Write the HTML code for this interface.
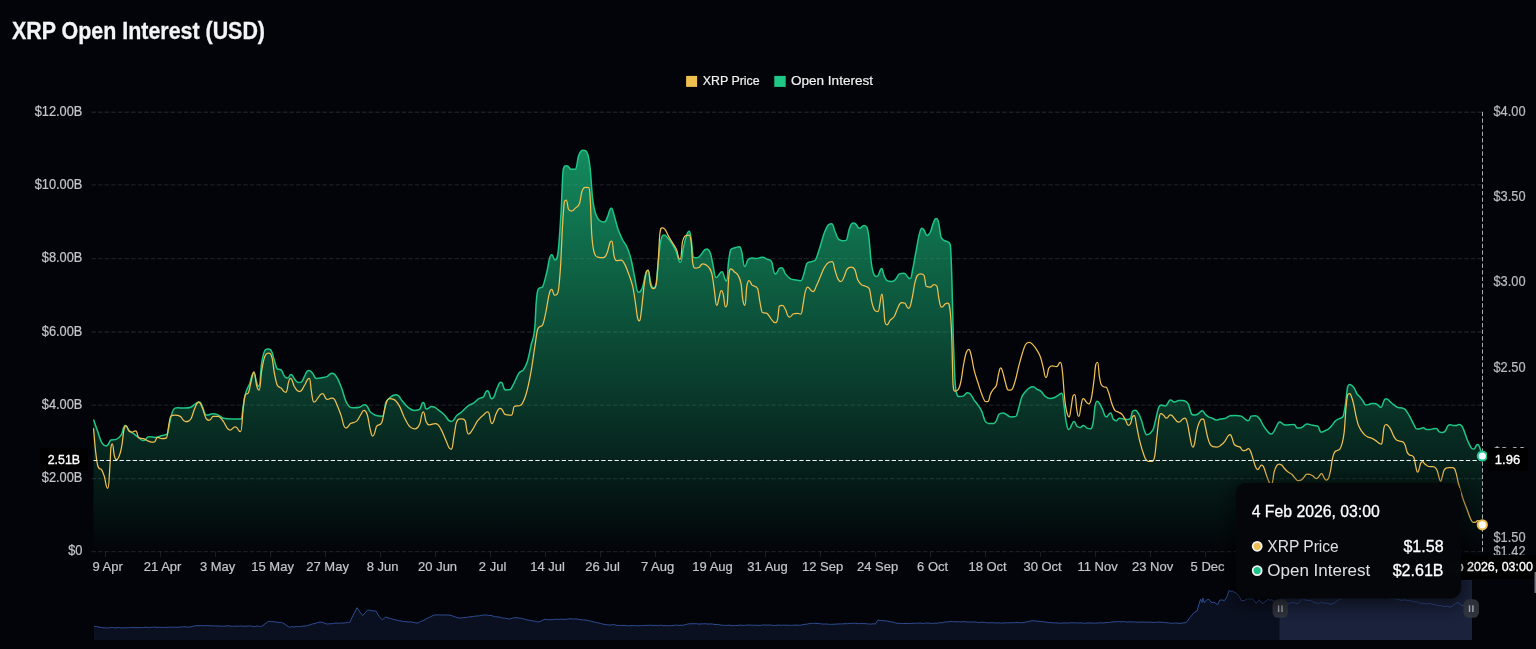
<!DOCTYPE html>
<html lang="en"><head><meta charset="utf-8"><title>XRP Open Interest (USD)</title>
<style>html,body{margin:0;padding:0;background:#020409;overflow:hidden}body{width:1536px;height:649px}svg{display:block;will-change:transform}</style></head>
<body>
<svg width="1536" height="649" viewBox="0 0 1536 649" font-family='"Liberation Sans", sans-serif'>
<defs>
<linearGradient id="ga" gradientUnits="userSpaceOnUse" x1="0" y1="150" x2="0" y2="551.5">
<stop offset="0" stop-color="#1bc482" stop-opacity="0.70"/>
<stop offset="1" stop-color="#1bc482" stop-opacity="0"/>
</linearGradient>
<filter id="sh" x="-20%" y="-30%" width="140%" height="160%"><feGaussianBlur stdDeviation="9"/></filter>
<clipPath id="cp"><rect x="93" y="100" width="1389.5" height="452"/></clipPath>
</defs>
<rect width="1536" height="649" fill="#020409"/>
<text x="12" y="38.8" font-size="23" font-weight="700" fill="#f3f4f5" stroke="#f3f4f5" stroke-width="0.3" textLength="253" lengthAdjust="spacingAndGlyphs">XRP Open Interest (USD)</text>
<rect x="686.1" y="75.9" width="11" height="11" fill="#efbf50"/>
<text x="702.7" y="84.9" font-size="12" fill="#f0f1f1" stroke="#f0f1f1" stroke-width="0.2" textLength="57" lengthAdjust="spacingAndGlyphs">XRP Price</text>
<rect x="774.3" y="75.9" width="11.4" height="11" fill="#20c887"/>
<text x="791" y="84.9" font-size="12" fill="#f0f1f1" stroke="#f0f1f1" stroke-width="0.2" textLength="82" lengthAdjust="spacingAndGlyphs">Open Interest</text>
<line x1="91.5" y1="112.25" x2="1482" y2="112.25" stroke="#ffffff" stroke-opacity="0.105" stroke-width="1.3" stroke-dasharray="4.4 2.2"/>
<text transform="translate(82.4 116.0) scale(0.915 1)" font-size="14" fill="#c3c5c9" stroke="#c3c5c9" stroke-width="0.22" text-anchor="end">$12.00B</text>
<line x1="91.5" y1="184.90" x2="1482" y2="184.90" stroke="#ffffff" stroke-opacity="0.105" stroke-width="1.3" stroke-dasharray="4.4 2.2"/>
<text transform="translate(82.4 188.6) scale(0.915 1)" font-size="14" fill="#c3c5c9" stroke="#c3c5c9" stroke-width="0.22" text-anchor="end">$10.00B</text>
<line x1="91.5" y1="258.65" x2="1482" y2="258.65" stroke="#ffffff" stroke-opacity="0.105" stroke-width="1.3" stroke-dasharray="4.4 2.2"/>
<text transform="translate(82.4 262.3) scale(0.915 1)" font-size="14" fill="#c3c5c9" stroke="#c3c5c9" stroke-width="0.22" text-anchor="end">$8.00B</text>
<line x1="91.5" y1="332.00" x2="1482" y2="332.00" stroke="#ffffff" stroke-opacity="0.105" stroke-width="1.3" stroke-dasharray="4.4 2.2"/>
<text transform="translate(82.4 335.7) scale(0.915 1)" font-size="14" fill="#c3c5c9" stroke="#c3c5c9" stroke-width="0.22" text-anchor="end">$6.00B</text>
<line x1="91.5" y1="405.20" x2="1482" y2="405.20" stroke="#ffffff" stroke-opacity="0.105" stroke-width="1.3" stroke-dasharray="4.4 2.2"/>
<text transform="translate(82.4 408.9) scale(0.915 1)" font-size="14" fill="#c3c5c9" stroke="#c3c5c9" stroke-width="0.22" text-anchor="end">$4.00B</text>
<line x1="91.5" y1="478.70" x2="1482" y2="478.70" stroke="#ffffff" stroke-opacity="0.105" stroke-width="1.3" stroke-dasharray="4.4 2.2"/>
<text transform="translate(82.4 482.4) scale(0.915 1)" font-size="14" fill="#c3c5c9" stroke="#c3c5c9" stroke-width="0.22" text-anchor="end">$2.00B</text>
<line x1="91.5" y1="551.60" x2="1482" y2="551.60" stroke="#ffffff" stroke-opacity="0.105" stroke-width="1.3" stroke-dasharray="4.4 2.2"/>
<text transform="translate(82.4 555.3) scale(0.915 1)" font-size="14" fill="#c3c5c9" stroke="#c3c5c9" stroke-width="0.22" text-anchor="end">$0</text>
<text transform="translate(1493.5 116.1) scale(0.915 1)" font-size="14" fill="#b9bbc0" stroke="#b9bbc0" stroke-width="0.22">$4.00</text>
<text transform="translate(1493.5 201.3) scale(0.915 1)" font-size="14" fill="#b9bbc0" stroke="#b9bbc0" stroke-width="0.22">$3.50</text>
<text transform="translate(1493.5 286.4) scale(0.915 1)" font-size="14" fill="#b9bbc0" stroke="#b9bbc0" stroke-width="0.22">$3.00</text>
<text transform="translate(1493.5 371.6) scale(0.915 1)" font-size="14" fill="#b9bbc0" stroke="#b9bbc0" stroke-width="0.22">$2.50</text>
<text transform="translate(1493.5 456.8) scale(0.915 1)" font-size="14" fill="#b9bbc0" stroke="#b9bbc0" stroke-width="0.22">$2.00</text>
<text transform="translate(1493.5 542.0) scale(0.915 1)" font-size="14" fill="#b9bbc0" stroke="#b9bbc0" stroke-width="0.22">$1.50</text>
<text transform="translate(1493.5 555.6) scale(0.915 1)" font-size="14" fill="#b9bbc0" stroke="#b9bbc0" stroke-width="0.22">$1.42</text>
<line x1="105.6" y1="551.6" x2="105.6" y2="557.1" stroke="#ffffff" stroke-opacity="0.11" stroke-width="1"/>
<text x="107.6" y="570.9" font-size="13" fill="#c3c5c9" stroke="#c3c5c9" stroke-width="0.2" text-anchor="middle">9 Apr</text>
<line x1="160.6" y1="551.6" x2="160.6" y2="557.1" stroke="#ffffff" stroke-opacity="0.11" stroke-width="1"/>
<text x="162.6" y="570.9" font-size="13" fill="#c3c5c9" stroke="#c3c5c9" stroke-width="0.2" text-anchor="middle">21 Apr</text>
<line x1="215.6" y1="551.6" x2="215.6" y2="557.1" stroke="#ffffff" stroke-opacity="0.11" stroke-width="1"/>
<text x="217.6" y="570.9" font-size="13" fill="#c3c5c9" stroke="#c3c5c9" stroke-width="0.2" text-anchor="middle">3 May</text>
<line x1="270.6" y1="551.6" x2="270.6" y2="557.1" stroke="#ffffff" stroke-opacity="0.11" stroke-width="1"/>
<text x="272.6" y="570.9" font-size="13" fill="#c3c5c9" stroke="#c3c5c9" stroke-width="0.2" text-anchor="middle">15 May</text>
<line x1="325.6" y1="551.6" x2="325.6" y2="557.1" stroke="#ffffff" stroke-opacity="0.11" stroke-width="1"/>
<text x="327.6" y="570.9" font-size="13" fill="#c3c5c9" stroke="#c3c5c9" stroke-width="0.2" text-anchor="middle">27 May</text>
<line x1="380.6" y1="551.6" x2="380.6" y2="557.1" stroke="#ffffff" stroke-opacity="0.11" stroke-width="1"/>
<text x="382.6" y="570.9" font-size="13" fill="#c3c5c9" stroke="#c3c5c9" stroke-width="0.2" text-anchor="middle">8 Jun</text>
<line x1="435.6" y1="551.6" x2="435.6" y2="557.1" stroke="#ffffff" stroke-opacity="0.11" stroke-width="1"/>
<text x="437.6" y="570.9" font-size="13" fill="#c3c5c9" stroke="#c3c5c9" stroke-width="0.2" text-anchor="middle">20 Jun</text>
<line x1="490.6" y1="551.6" x2="490.6" y2="557.1" stroke="#ffffff" stroke-opacity="0.11" stroke-width="1"/>
<text x="492.6" y="570.9" font-size="13" fill="#c3c5c9" stroke="#c3c5c9" stroke-width="0.2" text-anchor="middle">2 Jul</text>
<line x1="545.6" y1="551.6" x2="545.6" y2="557.1" stroke="#ffffff" stroke-opacity="0.11" stroke-width="1"/>
<text x="547.6" y="570.9" font-size="13" fill="#c3c5c9" stroke="#c3c5c9" stroke-width="0.2" text-anchor="middle">14 Jul</text>
<line x1="600.6" y1="551.6" x2="600.6" y2="557.1" stroke="#ffffff" stroke-opacity="0.11" stroke-width="1"/>
<text x="602.6" y="570.9" font-size="13" fill="#c3c5c9" stroke="#c3c5c9" stroke-width="0.2" text-anchor="middle">26 Jul</text>
<line x1="655.6" y1="551.6" x2="655.6" y2="557.1" stroke="#ffffff" stroke-opacity="0.11" stroke-width="1"/>
<text x="657.6" y="570.9" font-size="13" fill="#c3c5c9" stroke="#c3c5c9" stroke-width="0.2" text-anchor="middle">7 Aug</text>
<line x1="710.6" y1="551.6" x2="710.6" y2="557.1" stroke="#ffffff" stroke-opacity="0.11" stroke-width="1"/>
<text x="712.6" y="570.9" font-size="13" fill="#c3c5c9" stroke="#c3c5c9" stroke-width="0.2" text-anchor="middle">19 Aug</text>
<line x1="765.6" y1="551.6" x2="765.6" y2="557.1" stroke="#ffffff" stroke-opacity="0.11" stroke-width="1"/>
<text x="767.6" y="570.9" font-size="13" fill="#c3c5c9" stroke="#c3c5c9" stroke-width="0.2" text-anchor="middle">31 Aug</text>
<line x1="820.6" y1="551.6" x2="820.6" y2="557.1" stroke="#ffffff" stroke-opacity="0.11" stroke-width="1"/>
<text x="822.6" y="570.9" font-size="13" fill="#c3c5c9" stroke="#c3c5c9" stroke-width="0.2" text-anchor="middle">12 Sep</text>
<line x1="875.6" y1="551.6" x2="875.6" y2="557.1" stroke="#ffffff" stroke-opacity="0.11" stroke-width="1"/>
<text x="877.6" y="570.9" font-size="13" fill="#c3c5c9" stroke="#c3c5c9" stroke-width="0.2" text-anchor="middle">24 Sep</text>
<line x1="930.6" y1="551.6" x2="930.6" y2="557.1" stroke="#ffffff" stroke-opacity="0.11" stroke-width="1"/>
<text x="932.6" y="570.9" font-size="13" fill="#c3c5c9" stroke="#c3c5c9" stroke-width="0.2" text-anchor="middle">6 Oct</text>
<line x1="985.6" y1="551.6" x2="985.6" y2="557.1" stroke="#ffffff" stroke-opacity="0.11" stroke-width="1"/>
<text x="987.6" y="570.9" font-size="13" fill="#c3c5c9" stroke="#c3c5c9" stroke-width="0.2" text-anchor="middle">18 Oct</text>
<line x1="1040.6" y1="551.6" x2="1040.6" y2="557.1" stroke="#ffffff" stroke-opacity="0.11" stroke-width="1"/>
<text x="1042.6" y="570.9" font-size="13" fill="#c3c5c9" stroke="#c3c5c9" stroke-width="0.2" text-anchor="middle">30 Oct</text>
<line x1="1095.6" y1="551.6" x2="1095.6" y2="557.1" stroke="#ffffff" stroke-opacity="0.11" stroke-width="1"/>
<text x="1097.6" y="570.9" font-size="13" fill="#c3c5c9" stroke="#c3c5c9" stroke-width="0.2" text-anchor="middle">11 Nov</text>
<line x1="1150.6" y1="551.6" x2="1150.6" y2="557.1" stroke="#ffffff" stroke-opacity="0.11" stroke-width="1"/>
<text x="1152.6" y="570.9" font-size="13" fill="#c3c5c9" stroke="#c3c5c9" stroke-width="0.2" text-anchor="middle">23 Nov</text>
<line x1="1205.6" y1="551.6" x2="1205.6" y2="557.1" stroke="#ffffff" stroke-opacity="0.11" stroke-width="1"/>
<text x="1207.6" y="570.9" font-size="13" fill="#c3c5c9" stroke="#c3c5c9" stroke-width="0.2" text-anchor="middle">5 Dec</text>
<g clip-path="url(#cp)">
<path d="M93.5 419.5C95.0 423.7 96.4 428.1 97.9 432.1C99.2 435.7 100.5 440.6 101.8 442.6C103.3 444.8 103.6 446.0 106.2 446.0C109.0 446.0 109.4 440.4 110.9 440.0C112.7 439.4 114.4 440.0 116.2 439.4C117.9 438.9 119.7 437.4 121.4 434.7C122.7 432.7 123.1 425.6 125.3 425.6C127.6 425.6 128.0 429.6 129.3 430.8C130.6 432.0 131.9 432.5 133.2 433.4C134.9 434.7 136.7 436.2 138.4 437.4C140.2 438.5 140.6 440.5 143.7 440.5C146.7 440.5 145.9 436.8 148.9 436.8C152.7 436.8 151.6 437.4 155.5 437.4C159.3 437.4 159.8 436.1 162.0 435.5C163.7 435.1 165.5 435.5 167.2 434.2C168.1 433.6 169.0 425.2 169.9 421.6C171.0 417.0 172.1 411.5 173.3 409.9C174.7 407.8 175.1 407.8 177.7 407.8C181.5 407.8 180.4 408.0 184.3 408.0C188.1 408.0 188.6 408.0 190.8 407.2C192.6 406.6 194.3 404.2 196.0 403.3C197.2 402.7 197.5 402.0 199.4 402.0C201.3 402.0 201.5 405.3 202.6 407.2C203.9 409.6 204.2 415.1 206.5 415.1C210.3 415.1 209.2 413.8 213.1 413.8C216.1 413.8 216.6 414.4 218.3 415.1C220.0 415.8 221.8 417.7 223.5 418.2C226.2 419.0 228.8 419.0 231.4 419.0C234.7 419.0 238.0 419.0 241.3 419.0C242.0 419.0 242.6 409.7 243.2 405.9C244.0 400.6 244.9 396.0 245.8 392.8C247.1 388.1 248.4 386.9 249.7 383.7C251.0 380.4 251.4 373.2 253.6 373.2C255.2 373.2 255.4 378.9 256.3 381.1C257.1 383.2 257.4 386.3 258.9 386.3C260.4 386.3 260.6 369.4 261.5 364.0C262.4 358.6 263.2 354.2 264.1 352.3C265.4 349.3 265.8 348.9 268.0 348.9C270.3 348.9 270.7 349.7 272.0 352.3C272.8 354.0 273.7 358.7 274.6 361.4C275.5 364.2 276.3 368.1 277.2 368.8C278.5 369.8 279.8 368.8 281.1 369.8C282.4 370.8 283.8 376.2 285.1 377.1C285.9 377.7 286.2 377.9 287.7 377.9C289.7 377.9 289.1 374.5 291.1 374.5C292.9 374.5 293.2 377.3 294.2 378.4C295.5 379.9 295.9 382.4 298.2 382.4C300.1 382.4 300.4 382.4 301.6 381.8C302.6 381.4 303.7 377.5 304.7 375.8C306.0 373.7 306.3 370.6 308.6 370.6C310.9 370.6 311.2 372.0 312.6 373.2C313.9 374.4 314.2 378.4 316.5 378.4C319.5 378.4 320.0 378.0 321.7 377.7C323.5 377.4 325.2 377.2 327.0 376.6C328.7 376.0 329.1 373.2 332.2 373.2C335.3 373.2 335.7 375.7 337.4 378.4C338.7 380.5 340.1 384.2 341.4 387.6C343.1 392.0 344.8 399.8 346.5 402.6C348.7 406.1 349.3 407.8 353.1 407.8C356.9 407.8 357.5 407.8 359.6 407.3C361.4 406.9 361.8 404.7 364.9 404.7C367.9 404.7 368.4 410.1 370.1 411.8C371.9 413.4 373.6 414.6 375.3 415.2C377.7 416.0 378.3 416.2 382.4 416.2C384.4 416.2 384.7 405.2 385.8 402.6C387.1 399.6 388.4 398.9 389.7 397.9C391.9 396.1 392.5 394.7 396.3 394.7C399.3 394.7 399.8 398.1 401.5 400.0C403.7 402.3 405.9 405.7 408.1 407.3C410.3 408.9 410.8 410.4 414.6 410.4C417.7 410.4 418.1 410.4 419.9 409.1C421.0 408.3 421.3 402.6 423.3 402.6C425.1 402.6 424.6 409.1 426.4 409.1C429.5 409.1 428.6 406.5 431.6 406.5C435.5 406.5 436.0 408.5 438.2 409.9C440.4 411.3 442.6 413.2 444.7 415.2C446.9 417.1 447.5 421.4 451.3 421.4C454.3 421.4 454.8 417.3 456.5 415.7C458.3 414.1 460.0 413.2 461.8 411.8C463.9 410.0 466.1 407.2 468.3 405.7C470.0 404.6 471.8 404.3 473.5 403.1C475.3 402.0 477.0 399.7 478.8 398.7C480.3 397.8 481.9 398.1 483.5 396.8C484.8 395.8 485.1 390.8 487.4 390.8C490.0 390.8 489.3 398.7 491.9 398.7C494.9 398.7 495.4 391.2 497.1 388.2C498.4 385.9 498.7 382.2 501.0 382.2C503.6 382.2 502.9 390.0 505.5 390.0C508.2 390.0 508.6 390.0 510.2 389.5C511.5 389.1 512.8 385.3 514.1 383.0C515.9 379.8 517.6 374.4 519.4 372.5C520.7 371.0 522.0 371.4 523.3 369.9C524.6 368.3 525.9 365.9 527.2 362.0C528.5 358.1 529.8 351.3 531.1 345.0C532.4 338.7 533.8 341.0 535.1 324.0C535.4 319.6 535.8 308.4 536.1 303.9C536.8 294.9 537.5 290.5 538.1 289.3C539.7 286.3 541.3 288.9 542.8 286.3C544.2 284.1 545.6 276.6 546.9 271.7C548.5 266.1 548.9 254.7 551.6 254.7C553.7 254.7 553.1 260.0 555.1 260.0C556.8 260.0 557.1 258.6 558.0 252.7C559.0 246.7 560.0 228.9 561.0 213.2C561.8 200.6 562.5 172.1 563.3 169.3C564.3 165.8 564.5 165.8 566.2 165.8C569.1 165.8 569.6 169.3 571.2 169.3C572.7 169.3 574.1 169.3 575.6 169.3C576.6 169.3 577.6 158.7 578.5 156.1C580.0 152.2 580.4 150.2 582.9 150.2C585.5 150.2 585.9 150.2 587.3 153.2C588.3 155.1 589.3 160.9 590.2 169.3C591.0 176.0 591.8 192.1 592.6 198.5C593.6 206.5 594.5 210.1 595.5 213.2C596.9 217.5 598.2 219.4 599.6 220.5C601.2 221.8 601.6 222.0 604.3 222.0C606.3 222.0 606.6 218.4 607.8 216.1C609.0 213.8 609.3 208.2 611.3 208.2C613.0 208.2 613.3 213.1 614.2 216.1C615.5 219.9 616.8 225.6 618.0 229.3C619.5 233.5 621.0 236.6 622.4 239.5C623.9 242.4 625.4 243.6 626.8 246.8C628.3 250.1 629.8 254.2 631.2 260.0C632.4 264.6 633.6 272.4 634.7 277.6C636.0 283.1 636.3 292.2 638.5 292.2C640.8 292.2 641.1 290.7 642.3 287.8C643.5 285.1 644.7 275.8 645.9 273.2C646.5 271.6 646.7 270.2 647.9 270.2C649.3 270.2 649.5 277.9 650.2 280.5C651.2 283.8 651.5 287.8 653.2 287.8C654.9 287.8 655.1 287.8 656.1 283.4C656.8 280.3 657.5 269.3 658.1 262.9C658.9 255.6 659.7 246.2 660.5 242.4C661.7 236.8 662.0 235.1 664.0 235.1C666.2 235.1 666.5 236.8 667.8 238.0C669.3 239.5 670.7 241.5 672.2 243.9C673.7 246.3 675.1 249.4 676.6 252.7C677.9 255.6 678.2 262.3 680.4 262.3C682.1 262.3 682.3 252.6 683.3 248.3C684.3 244.0 685.3 239.2 686.2 236.6C687.2 234.0 687.5 231.3 689.2 231.3C690.4 231.3 690.5 235.5 691.2 239.5C691.9 243.5 692.6 256.8 693.3 257.1C694.5 257.7 694.9 257.7 697.1 257.7C699.6 257.7 700.0 255.4 701.5 254.1C703.2 252.6 703.7 248.9 706.7 248.9C708.8 248.9 709.1 249.9 710.2 252.7C711.2 255.0 712.2 261.7 713.2 265.9C714.1 270.0 714.4 277.6 716.1 277.6C717.8 277.6 718.0 275.6 719.0 274.6C720.0 273.7 720.2 271.7 722.0 271.7C723.7 271.7 723.9 277.5 724.9 279.0C725.5 280.0 725.6 281.1 726.6 281.1C727.7 281.1 727.8 267.5 728.4 262.9C729.2 256.8 730.0 250.8 730.7 249.8C732.2 247.7 733.7 248.2 735.1 247.7C736.6 247.3 737.0 246.8 739.5 246.8C740.9 246.8 741.1 250.1 741.9 252.7C742.8 256.0 743.1 266.4 744.8 266.4C746.5 266.4 746.7 261.1 747.7 260.0C749.1 258.4 749.4 258.0 751.8 258.0C754.3 258.0 753.6 258.5 756.2 258.5C759.8 258.5 758.7 257.3 762.3 257.3C765.0 257.3 765.4 258.4 766.9 259.2C768.5 259.9 770.0 259.3 771.6 261.6C772.8 263.5 773.1 273.9 775.3 273.9C777.6 273.9 777.9 269.1 779.3 268.4C780.0 268.0 780.2 267.8 781.4 267.8C783.8 267.8 784.1 272.3 785.4 273.9C787.0 275.9 788.5 277.7 790.1 278.6C792.1 279.7 794.2 279.7 796.2 280.1C797.8 280.4 798.1 280.7 800.8 280.7C802.6 280.7 802.9 276.8 803.9 273.9C804.9 271.1 806.0 264.2 807.0 263.2C808.5 261.6 810.1 262.2 811.6 261.6C812.8 261.2 814.1 261.4 815.3 260.1C816.6 258.6 818.0 253.3 819.3 249.3C820.9 244.7 822.4 237.9 823.9 233.9C825.5 229.9 827.0 225.8 828.6 224.6C829.6 223.9 829.8 223.7 831.6 223.7C833.4 223.7 833.7 228.5 834.7 230.8C836.1 233.8 837.4 238.2 838.7 239.4C840.0 240.5 840.3 240.7 842.4 240.7C844.8 240.7 845.1 240.7 846.4 240.1C847.4 239.6 848.3 231.7 849.2 229.3C850.5 225.8 850.9 223.1 853.2 223.1C855.0 223.1 855.3 223.8 856.3 224.6C857.3 225.4 857.6 228.3 859.4 228.3C862.1 228.3 861.3 225.6 864.0 225.6C865.8 225.6 866.0 225.6 867.1 227.7C867.8 229.2 868.5 233.8 869.2 240.1C869.7 244.5 870.3 254.1 870.8 258.5C871.6 265.7 872.4 270.1 873.2 272.4C874.5 275.9 874.8 276.4 876.9 276.4C878.4 276.4 878.6 273.8 879.4 272.4C880.1 271.1 880.3 268.4 881.6 268.4C883.0 268.4 883.2 273.6 884.0 275.5C885.0 277.8 886.1 280.1 887.1 280.7C888.6 281.6 889.0 281.6 891.7 281.6C893.9 281.6 894.2 280.6 895.4 279.5C896.8 278.3 898.1 274.5 899.4 273.9C901.0 273.3 901.3 273.3 904.0 273.3C906.2 273.3 906.5 276.1 907.7 277.0C908.6 277.7 908.8 278.6 910.2 278.6C911.6 278.6 911.8 272.9 912.7 269.3C913.9 263.9 915.1 255.7 916.4 249.3C917.4 244.0 918.4 237.2 919.4 233.9C920.3 231.2 920.5 228.3 921.9 228.3C923.2 228.3 923.4 229.4 924.1 230.2C925.1 231.4 925.4 235.4 927.2 235.4C928.9 235.4 929.2 234.1 930.2 232.3C931.3 230.6 932.3 225.3 933.3 223.1C934.3 220.9 934.6 218.5 936.4 218.5C937.7 218.5 937.8 219.9 938.5 222.2C939.4 224.8 940.2 234.6 941.0 237.0C941.8 239.3 942.7 239.4 943.5 240.1C944.7 241.0 945.9 240.8 947.2 241.6C948.2 242.3 949.2 241.6 950.3 244.7C950.8 246.2 951.3 262.1 951.8 277.0C952.3 291.9 952.8 322.1 953.3 338.6C953.9 355.2 954.4 370.6 954.9 378.7C955.3 385.8 955.8 390.2 956.2 392.0C957.4 396.5 957.7 396.5 959.6 396.5C961.9 396.5 962.3 396.4 963.6 395.9C964.9 395.5 965.2 392.8 967.5 392.8C969.0 392.8 969.2 393.2 970.1 393.8C971.4 394.8 972.7 398.0 974.0 399.9C975.3 401.7 976.7 403.1 978.0 405.1C979.3 407.0 980.6 408.7 981.9 411.6C982.9 414.0 984.0 419.2 985.0 420.8C986.2 422.6 987.3 423.4 988.4 423.4C990.2 423.4 991.9 423.4 993.7 423.4C994.5 423.4 995.4 422.2 996.3 420.8C997.2 419.4 998.0 415.1 998.9 414.3C1000.2 413.0 1000.5 413.0 1002.8 413.0C1005.1 413.0 1005.5 414.1 1006.8 414.8C1008.1 415.4 1008.4 416.9 1010.7 416.9C1013.7 416.9 1014.2 416.9 1015.9 416.4C1016.8 416.1 1017.7 411.8 1018.5 409.0C1019.6 405.7 1020.6 399.8 1021.7 397.2C1022.8 394.5 1024.0 393.4 1025.1 392.0C1026.4 390.4 1027.7 388.8 1029.0 388.1C1030.3 387.3 1030.7 386.8 1033.0 386.8C1035.2 386.8 1035.6 388.7 1036.9 389.4C1038.2 390.1 1039.5 390.2 1040.8 391.2C1042.1 392.2 1043.4 394.9 1044.7 395.9C1046.5 397.3 1046.9 398.5 1050.0 398.5C1053.0 398.5 1053.5 398.0 1055.2 397.2C1056.5 396.7 1057.8 395.4 1059.1 394.6C1060.0 394.1 1060.2 393.3 1061.8 393.3C1063.0 393.3 1063.1 399.5 1063.8 403.8C1064.6 408.6 1065.4 418.4 1066.2 422.1C1067.1 426.3 1067.3 429.4 1068.8 429.4C1070.5 429.4 1070.7 426.1 1071.7 424.7C1072.5 423.6 1072.7 421.6 1074.1 421.6C1075.6 421.6 1075.8 425.3 1076.7 426.0C1077.8 427.0 1078.1 427.4 1080.1 427.4C1082.1 427.4 1081.5 425.5 1083.5 425.5C1085.3 425.5 1085.6 427.4 1086.6 427.9C1087.9 428.4 1088.3 428.7 1090.6 428.7C1092.1 428.7 1092.3 426.5 1093.2 422.1C1093.8 419.0 1094.4 409.4 1095.0 406.4C1095.7 403.0 1095.9 401.2 1097.1 401.2C1098.6 401.2 1098.8 402.6 1099.7 403.8C1100.8 405.3 1101.8 408.2 1102.9 410.3C1104.0 412.6 1104.3 416.9 1106.3 416.9C1107.8 416.9 1108.0 415.0 1108.9 414.3C1109.5 413.8 1109.6 413.0 1110.7 413.0C1111.9 413.0 1112.1 417.1 1112.8 418.2C1113.9 419.8 1114.1 420.8 1116.0 420.8C1117.9 420.8 1117.4 418.2 1119.4 418.2C1121.6 418.2 1122.0 418.8 1123.3 419.0C1124.6 419.2 1124.9 419.5 1127.2 419.5C1129.2 419.5 1129.5 419.5 1130.6 418.2C1131.2 417.5 1131.8 412.6 1132.4 411.6C1133.3 410.3 1133.5 410.3 1135.1 410.3C1137.1 410.3 1137.3 412.0 1138.5 413.7C1139.5 415.3 1140.6 417.8 1141.6 420.8C1142.5 423.3 1143.4 427.8 1144.2 430.0C1145.1 432.2 1145.3 434.7 1146.8 434.7C1149.1 434.7 1149.5 433.8 1150.8 432.6C1151.6 431.7 1152.5 430.8 1153.4 428.7C1154.3 426.5 1155.1 421.7 1156.0 418.2C1156.9 414.7 1157.8 409.5 1158.6 407.7C1159.5 405.9 1159.7 405.1 1161.2 405.1C1163.5 405.1 1162.9 405.9 1165.2 405.9C1166.7 405.9 1166.9 404.3 1167.8 403.3C1168.7 402.3 1168.9 399.9 1170.4 399.9C1172.7 399.9 1172.0 402.0 1174.3 402.0C1176.6 402.0 1177.0 400.8 1178.3 400.6C1179.6 400.4 1179.9 400.4 1182.2 400.4C1184.5 400.4 1184.8 400.7 1186.1 401.7C1187.0 402.3 1187.9 403.3 1188.7 405.1C1189.6 406.9 1190.5 412.4 1191.4 413.7C1191.6 414.1 1191.8 414.3 1192.0 414.5C1193.0 415.1 1193.3 415.1 1195.0 415.1C1197.3 415.1 1197.7 413.9 1199.0 413.1C1200.1 412.4 1200.4 410.7 1202.4 410.7C1203.9 410.7 1204.2 413.2 1205.0 414.1C1206.4 415.4 1207.7 416.4 1209.0 417.1C1210.4 417.7 1211.7 417.9 1213.0 418.5C1214.0 418.9 1214.3 420.1 1216.0 420.1C1218.4 420.1 1218.7 419.3 1220.0 419.1C1222.0 418.6 1224.0 418.8 1226.0 418.1C1227.4 417.6 1228.7 415.8 1230.1 415.7C1231.7 415.5 1232.1 415.5 1235.1 415.5C1238.6 415.5 1239.1 415.5 1241.1 416.1C1242.4 416.5 1243.7 418.2 1245.1 419.1C1246.1 419.7 1246.3 420.7 1248.1 420.7C1249.8 420.7 1250.1 416.4 1251.1 416.1C1252.4 415.7 1252.7 415.7 1255.1 415.7C1257.4 415.7 1257.8 416.7 1259.1 418.1C1260.4 419.4 1261.8 423.0 1263.1 425.1C1264.4 427.2 1265.8 429.2 1267.1 430.7C1268.4 432.1 1268.8 434.1 1271.1 434.1C1272.9 434.1 1273.1 432.5 1274.1 431.1C1275.1 429.7 1276.1 426.6 1277.1 425.1C1278.0 423.8 1278.2 422.1 1279.7 422.1C1281.3 422.1 1281.6 423.2 1282.5 423.7C1283.7 424.2 1284.0 425.1 1286.1 425.1C1288.5 425.1 1288.8 424.8 1290.1 424.7C1291.5 424.6 1291.8 424.5 1294.1 424.5C1295.9 424.5 1296.1 428.1 1297.1 428.1C1298.1 428.1 1299.1 428.1 1300.1 428.1C1301.1 428.1 1302.1 427.2 1303.1 426.7C1304.5 425.9 1304.8 424.1 1307.1 424.1C1309.5 424.1 1309.8 424.8 1311.2 425.1C1312.5 425.3 1313.8 425.4 1315.2 425.7C1316.2 425.9 1317.2 425.7 1318.2 426.5C1319.2 427.2 1319.4 432.1 1321.2 432.1C1322.9 432.1 1323.2 431.5 1324.2 431.1C1325.5 430.5 1326.8 430.0 1328.2 429.1C1329.5 428.1 1330.8 426.6 1332.2 425.1C1333.2 423.9 1334.2 422.0 1335.2 421.1C1336.5 419.8 1337.9 419.5 1339.2 418.7C1340.5 417.8 1341.9 418.7 1343.2 416.1C1344.1 414.2 1345.1 406.6 1346.0 400.0C1346.5 396.3 1347.1 388.9 1347.6 387.0C1348.3 384.6 1348.4 384.6 1349.6 384.6C1351.0 384.6 1351.2 385.1 1352.0 385.6C1352.8 386.2 1353.6 387.2 1354.4 388.4C1355.3 389.8 1356.2 392.7 1357.0 394.0C1358.0 395.5 1359.0 395.9 1360.0 397.0C1361.0 398.2 1362.0 399.7 1363.0 401.0C1364.0 402.4 1364.3 405.0 1366.0 405.0C1367.8 405.0 1368.0 404.7 1369.0 404.4C1370.0 404.2 1370.3 403.4 1372.0 403.4C1373.8 403.4 1374.0 403.5 1375.0 403.6C1376.0 403.8 1377.0 404.4 1378.0 405.0C1379.0 405.7 1379.3 407.4 1381.1 407.4C1382.2 407.4 1382.4 404.4 1383.1 403.0C1383.7 401.6 1384.4 399.0 1385.1 399.0C1385.7 399.0 1386.4 399.0 1387.1 399.0C1388.1 399.0 1389.1 400.8 1390.1 401.6C1391.4 402.8 1392.7 404.1 1394.1 405.0C1395.4 406.0 1396.7 407.3 1398.1 407.6C1399.4 408.0 1400.7 407.7 1402.1 408.0C1403.1 408.3 1404.1 408.6 1405.1 409.4C1406.1 410.3 1407.1 412.1 1408.1 413.7C1409.1 415.2 1410.1 417.2 1411.1 419.1C1412.1 421.0 1413.1 423.4 1414.1 425.1C1415.1 426.7 1415.3 429.1 1417.1 429.1C1418.8 429.1 1419.1 428.9 1420.1 428.7C1421.1 428.5 1421.4 427.7 1423.1 427.7C1424.9 427.7 1425.1 429.5 1426.1 429.5C1427.4 429.5 1428.8 429.5 1430.1 429.5C1431.1 429.5 1432.1 428.8 1433.1 428.7C1434.1 428.5 1434.4 428.5 1436.1 428.5C1437.9 428.5 1438.1 431.1 1439.1 431.7C1440.1 432.2 1440.4 432.5 1442.1 432.5C1443.9 432.5 1444.1 432.1 1445.1 431.1C1446.0 430.2 1446.9 427.0 1447.7 426.1C1448.5 425.2 1448.7 424.7 1450.1 424.7C1451.9 424.7 1452.1 425.5 1453.1 425.5C1454.1 425.5 1455.1 425.5 1456.1 425.5C1457.1 425.5 1457.4 424.5 1459.1 424.5C1460.7 424.5 1460.9 425.1 1461.8 426.1C1462.6 427.0 1463.4 429.1 1464.2 431.1C1465.0 433.1 1465.8 436.0 1466.6 438.1C1467.4 440.3 1468.3 442.4 1469.2 444.1C1470.0 445.8 1470.9 447.9 1471.8 448.5C1472.4 449.0 1472.6 449.1 1473.8 449.1C1475.2 449.1 1475.4 446.5 1476.2 445.7C1476.7 445.2 1476.8 444.5 1477.8 444.5C1478.8 444.5 1479.0 445.8 1479.6 447.1C1480.4 448.9 1481.2 453.0 1482.0 456.0L1482.0 551.6 L93.5 551.6 Z" fill="url(#ga)"/>
<path d="M93.5 419.5C95.0 423.7 96.4 428.1 97.9 432.1C99.2 435.7 100.5 440.6 101.8 442.6C103.3 444.8 103.6 446.0 106.2 446.0C109.0 446.0 109.4 440.4 110.9 440.0C112.7 439.4 114.4 440.0 116.2 439.4C117.9 438.9 119.7 437.4 121.4 434.7C122.7 432.7 123.1 425.6 125.3 425.6C127.6 425.6 128.0 429.6 129.3 430.8C130.6 432.0 131.9 432.5 133.2 433.4C134.9 434.7 136.7 436.2 138.4 437.4C140.2 438.5 140.6 440.5 143.7 440.5C146.7 440.5 145.9 436.8 148.9 436.8C152.7 436.8 151.6 437.4 155.5 437.4C159.3 437.4 159.8 436.1 162.0 435.5C163.7 435.1 165.5 435.5 167.2 434.2C168.1 433.6 169.0 425.2 169.9 421.6C171.0 417.0 172.1 411.5 173.3 409.9C174.7 407.8 175.1 407.8 177.7 407.8C181.5 407.8 180.4 408.0 184.3 408.0C188.1 408.0 188.6 408.0 190.8 407.2C192.6 406.6 194.3 404.2 196.0 403.3C197.2 402.7 197.5 402.0 199.4 402.0C201.3 402.0 201.5 405.3 202.6 407.2C203.9 409.6 204.2 415.1 206.5 415.1C210.3 415.1 209.2 413.8 213.1 413.8C216.1 413.8 216.6 414.4 218.3 415.1C220.0 415.8 221.8 417.7 223.5 418.2C226.2 419.0 228.8 419.0 231.4 419.0C234.7 419.0 238.0 419.0 241.3 419.0C242.0 419.0 242.6 409.7 243.2 405.9C244.0 400.6 244.9 396.0 245.8 392.8C247.1 388.1 248.4 386.9 249.7 383.7C251.0 380.4 251.4 373.2 253.6 373.2C255.2 373.2 255.4 378.9 256.3 381.1C257.1 383.2 257.4 386.3 258.9 386.3C260.4 386.3 260.6 369.4 261.5 364.0C262.4 358.6 263.2 354.2 264.1 352.3C265.4 349.3 265.8 348.9 268.0 348.9C270.3 348.9 270.7 349.7 272.0 352.3C272.8 354.0 273.7 358.7 274.6 361.4C275.5 364.2 276.3 368.1 277.2 368.8C278.5 369.8 279.8 368.8 281.1 369.8C282.4 370.8 283.8 376.2 285.1 377.1C285.9 377.7 286.2 377.9 287.7 377.9C289.7 377.9 289.1 374.5 291.1 374.5C292.9 374.5 293.2 377.3 294.2 378.4C295.5 379.9 295.9 382.4 298.2 382.4C300.1 382.4 300.4 382.4 301.6 381.8C302.6 381.4 303.7 377.5 304.7 375.8C306.0 373.7 306.3 370.6 308.6 370.6C310.9 370.6 311.2 372.0 312.6 373.2C313.9 374.4 314.2 378.4 316.5 378.4C319.5 378.4 320.0 378.0 321.7 377.7C323.5 377.4 325.2 377.2 327.0 376.6C328.7 376.0 329.1 373.2 332.2 373.2C335.3 373.2 335.7 375.7 337.4 378.4C338.7 380.5 340.1 384.2 341.4 387.6C343.1 392.0 344.8 399.8 346.5 402.6C348.7 406.1 349.3 407.8 353.1 407.8C356.9 407.8 357.5 407.8 359.6 407.3C361.4 406.9 361.8 404.7 364.9 404.7C367.9 404.7 368.4 410.1 370.1 411.8C371.9 413.4 373.6 414.6 375.3 415.2C377.7 416.0 378.3 416.2 382.4 416.2C384.4 416.2 384.7 405.2 385.8 402.6C387.1 399.6 388.4 398.9 389.7 397.9C391.9 396.1 392.5 394.7 396.3 394.7C399.3 394.7 399.8 398.1 401.5 400.0C403.7 402.3 405.9 405.7 408.1 407.3C410.3 408.9 410.8 410.4 414.6 410.4C417.7 410.4 418.1 410.4 419.9 409.1C421.0 408.3 421.3 402.6 423.3 402.6C425.1 402.6 424.6 409.1 426.4 409.1C429.5 409.1 428.6 406.5 431.6 406.5C435.5 406.5 436.0 408.5 438.2 409.9C440.4 411.3 442.6 413.2 444.7 415.2C446.9 417.1 447.5 421.4 451.3 421.4C454.3 421.4 454.8 417.3 456.5 415.7C458.3 414.1 460.0 413.2 461.8 411.8C463.9 410.0 466.1 407.2 468.3 405.7C470.0 404.6 471.8 404.3 473.5 403.1C475.3 402.0 477.0 399.7 478.8 398.7C480.3 397.8 481.9 398.1 483.5 396.8C484.8 395.8 485.1 390.8 487.4 390.8C490.0 390.8 489.3 398.7 491.9 398.7C494.9 398.7 495.4 391.2 497.1 388.2C498.4 385.9 498.7 382.2 501.0 382.2C503.6 382.2 502.9 390.0 505.5 390.0C508.2 390.0 508.6 390.0 510.2 389.5C511.5 389.1 512.8 385.3 514.1 383.0C515.9 379.8 517.6 374.4 519.4 372.5C520.7 371.0 522.0 371.4 523.3 369.9C524.6 368.3 525.9 365.9 527.2 362.0C528.5 358.1 529.8 351.3 531.1 345.0C532.4 338.7 533.8 341.0 535.1 324.0C535.4 319.6 535.8 308.4 536.1 303.9C536.8 294.9 537.5 290.5 538.1 289.3C539.7 286.3 541.3 288.9 542.8 286.3C544.2 284.1 545.6 276.6 546.9 271.7C548.5 266.1 548.9 254.7 551.6 254.7C553.7 254.7 553.1 260.0 555.1 260.0C556.8 260.0 557.1 258.6 558.0 252.7C559.0 246.7 560.0 228.9 561.0 213.2C561.8 200.6 562.5 172.1 563.3 169.3C564.3 165.8 564.5 165.8 566.2 165.8C569.1 165.8 569.6 169.3 571.2 169.3C572.7 169.3 574.1 169.3 575.6 169.3C576.6 169.3 577.6 158.7 578.5 156.1C580.0 152.2 580.4 150.2 582.9 150.2C585.5 150.2 585.9 150.2 587.3 153.2C588.3 155.1 589.3 160.9 590.2 169.3C591.0 176.0 591.8 192.1 592.6 198.5C593.6 206.5 594.5 210.1 595.5 213.2C596.9 217.5 598.2 219.4 599.6 220.5C601.2 221.8 601.6 222.0 604.3 222.0C606.3 222.0 606.6 218.4 607.8 216.1C609.0 213.8 609.3 208.2 611.3 208.2C613.0 208.2 613.3 213.1 614.2 216.1C615.5 219.9 616.8 225.6 618.0 229.3C619.5 233.5 621.0 236.6 622.4 239.5C623.9 242.4 625.4 243.6 626.8 246.8C628.3 250.1 629.8 254.2 631.2 260.0C632.4 264.6 633.6 272.4 634.7 277.6C636.0 283.1 636.3 292.2 638.5 292.2C640.8 292.2 641.1 290.7 642.3 287.8C643.5 285.1 644.7 275.8 645.9 273.2C646.5 271.6 646.7 270.2 647.9 270.2C649.3 270.2 649.5 277.9 650.2 280.5C651.2 283.8 651.5 287.8 653.2 287.8C654.9 287.8 655.1 287.8 656.1 283.4C656.8 280.3 657.5 269.3 658.1 262.9C658.9 255.6 659.7 246.2 660.5 242.4C661.7 236.8 662.0 235.1 664.0 235.1C666.2 235.1 666.5 236.8 667.8 238.0C669.3 239.5 670.7 241.5 672.2 243.9C673.7 246.3 675.1 249.4 676.6 252.7C677.9 255.6 678.2 262.3 680.4 262.3C682.1 262.3 682.3 252.6 683.3 248.3C684.3 244.0 685.3 239.2 686.2 236.6C687.2 234.0 687.5 231.3 689.2 231.3C690.4 231.3 690.5 235.5 691.2 239.5C691.9 243.5 692.6 256.8 693.3 257.1C694.5 257.7 694.9 257.7 697.1 257.7C699.6 257.7 700.0 255.4 701.5 254.1C703.2 252.6 703.7 248.9 706.7 248.9C708.8 248.9 709.1 249.9 710.2 252.7C711.2 255.0 712.2 261.7 713.2 265.9C714.1 270.0 714.4 277.6 716.1 277.6C717.8 277.6 718.0 275.6 719.0 274.6C720.0 273.7 720.2 271.7 722.0 271.7C723.7 271.7 723.9 277.5 724.9 279.0C725.5 280.0 725.6 281.1 726.6 281.1C727.7 281.1 727.8 267.5 728.4 262.9C729.2 256.8 730.0 250.8 730.7 249.8C732.2 247.7 733.7 248.2 735.1 247.7C736.6 247.3 737.0 246.8 739.5 246.8C740.9 246.8 741.1 250.1 741.9 252.7C742.8 256.0 743.1 266.4 744.8 266.4C746.5 266.4 746.7 261.1 747.7 260.0C749.1 258.4 749.4 258.0 751.8 258.0C754.3 258.0 753.6 258.5 756.2 258.5C759.8 258.5 758.7 257.3 762.3 257.3C765.0 257.3 765.4 258.4 766.9 259.2C768.5 259.9 770.0 259.3 771.6 261.6C772.8 263.5 773.1 273.9 775.3 273.9C777.6 273.9 777.9 269.1 779.3 268.4C780.0 268.0 780.2 267.8 781.4 267.8C783.8 267.8 784.1 272.3 785.4 273.9C787.0 275.9 788.5 277.7 790.1 278.6C792.1 279.7 794.2 279.7 796.2 280.1C797.8 280.4 798.1 280.7 800.8 280.7C802.6 280.7 802.9 276.8 803.9 273.9C804.9 271.1 806.0 264.2 807.0 263.2C808.5 261.6 810.1 262.2 811.6 261.6C812.8 261.2 814.1 261.4 815.3 260.1C816.6 258.6 818.0 253.3 819.3 249.3C820.9 244.7 822.4 237.9 823.9 233.9C825.5 229.9 827.0 225.8 828.6 224.6C829.6 223.9 829.8 223.7 831.6 223.7C833.4 223.7 833.7 228.5 834.7 230.8C836.1 233.8 837.4 238.2 838.7 239.4C840.0 240.5 840.3 240.7 842.4 240.7C844.8 240.7 845.1 240.7 846.4 240.1C847.4 239.6 848.3 231.7 849.2 229.3C850.5 225.8 850.9 223.1 853.2 223.1C855.0 223.1 855.3 223.8 856.3 224.6C857.3 225.4 857.6 228.3 859.4 228.3C862.1 228.3 861.3 225.6 864.0 225.6C865.8 225.6 866.0 225.6 867.1 227.7C867.8 229.2 868.5 233.8 869.2 240.1C869.7 244.5 870.3 254.1 870.8 258.5C871.6 265.7 872.4 270.1 873.2 272.4C874.5 275.9 874.8 276.4 876.9 276.4C878.4 276.4 878.6 273.8 879.4 272.4C880.1 271.1 880.3 268.4 881.6 268.4C883.0 268.4 883.2 273.6 884.0 275.5C885.0 277.8 886.1 280.1 887.1 280.7C888.6 281.6 889.0 281.6 891.7 281.6C893.9 281.6 894.2 280.6 895.4 279.5C896.8 278.3 898.1 274.5 899.4 273.9C901.0 273.3 901.3 273.3 904.0 273.3C906.2 273.3 906.5 276.1 907.7 277.0C908.6 277.7 908.8 278.6 910.2 278.6C911.6 278.6 911.8 272.9 912.7 269.3C913.9 263.9 915.1 255.7 916.4 249.3C917.4 244.0 918.4 237.2 919.4 233.9C920.3 231.2 920.5 228.3 921.9 228.3C923.2 228.3 923.4 229.4 924.1 230.2C925.1 231.4 925.4 235.4 927.2 235.4C928.9 235.4 929.2 234.1 930.2 232.3C931.3 230.6 932.3 225.3 933.3 223.1C934.3 220.9 934.6 218.5 936.4 218.5C937.7 218.5 937.8 219.9 938.5 222.2C939.4 224.8 940.2 234.6 941.0 237.0C941.8 239.3 942.7 239.4 943.5 240.1C944.7 241.0 945.9 240.8 947.2 241.6C948.2 242.3 949.2 241.6 950.3 244.7C950.8 246.2 951.3 262.1 951.8 277.0C952.3 291.9 952.8 322.1 953.3 338.6C953.9 355.2 954.4 370.6 954.9 378.7C955.3 385.8 955.8 390.2 956.2 392.0C957.4 396.5 957.7 396.5 959.6 396.5C961.9 396.5 962.3 396.4 963.6 395.9C964.9 395.5 965.2 392.8 967.5 392.8C969.0 392.8 969.2 393.2 970.1 393.8C971.4 394.8 972.7 398.0 974.0 399.9C975.3 401.7 976.7 403.1 978.0 405.1C979.3 407.0 980.6 408.7 981.9 411.6C982.9 414.0 984.0 419.2 985.0 420.8C986.2 422.6 987.3 423.4 988.4 423.4C990.2 423.4 991.9 423.4 993.7 423.4C994.5 423.4 995.4 422.2 996.3 420.8C997.2 419.4 998.0 415.1 998.9 414.3C1000.2 413.0 1000.5 413.0 1002.8 413.0C1005.1 413.0 1005.5 414.1 1006.8 414.8C1008.1 415.4 1008.4 416.9 1010.7 416.9C1013.7 416.9 1014.2 416.9 1015.9 416.4C1016.8 416.1 1017.7 411.8 1018.5 409.0C1019.6 405.7 1020.6 399.8 1021.7 397.2C1022.8 394.5 1024.0 393.4 1025.1 392.0C1026.4 390.4 1027.7 388.8 1029.0 388.1C1030.3 387.3 1030.7 386.8 1033.0 386.8C1035.2 386.8 1035.6 388.7 1036.9 389.4C1038.2 390.1 1039.5 390.2 1040.8 391.2C1042.1 392.2 1043.4 394.9 1044.7 395.9C1046.5 397.3 1046.9 398.5 1050.0 398.5C1053.0 398.5 1053.5 398.0 1055.2 397.2C1056.5 396.7 1057.8 395.4 1059.1 394.6C1060.0 394.1 1060.2 393.3 1061.8 393.3C1063.0 393.3 1063.1 399.5 1063.8 403.8C1064.6 408.6 1065.4 418.4 1066.2 422.1C1067.1 426.3 1067.3 429.4 1068.8 429.4C1070.5 429.4 1070.7 426.1 1071.7 424.7C1072.5 423.6 1072.7 421.6 1074.1 421.6C1075.6 421.6 1075.8 425.3 1076.7 426.0C1077.8 427.0 1078.1 427.4 1080.1 427.4C1082.1 427.4 1081.5 425.5 1083.5 425.5C1085.3 425.5 1085.6 427.4 1086.6 427.9C1087.9 428.4 1088.3 428.7 1090.6 428.7C1092.1 428.7 1092.3 426.5 1093.2 422.1C1093.8 419.0 1094.4 409.4 1095.0 406.4C1095.7 403.0 1095.9 401.2 1097.1 401.2C1098.6 401.2 1098.8 402.6 1099.7 403.8C1100.8 405.3 1101.8 408.2 1102.9 410.3C1104.0 412.6 1104.3 416.9 1106.3 416.9C1107.8 416.9 1108.0 415.0 1108.9 414.3C1109.5 413.8 1109.6 413.0 1110.7 413.0C1111.9 413.0 1112.1 417.1 1112.8 418.2C1113.9 419.8 1114.1 420.8 1116.0 420.8C1117.9 420.8 1117.4 418.2 1119.4 418.2C1121.6 418.2 1122.0 418.8 1123.3 419.0C1124.6 419.2 1124.9 419.5 1127.2 419.5C1129.2 419.5 1129.5 419.5 1130.6 418.2C1131.2 417.5 1131.8 412.6 1132.4 411.6C1133.3 410.3 1133.5 410.3 1135.1 410.3C1137.1 410.3 1137.3 412.0 1138.5 413.7C1139.5 415.3 1140.6 417.8 1141.6 420.8C1142.5 423.3 1143.4 427.8 1144.2 430.0C1145.1 432.2 1145.3 434.7 1146.8 434.7C1149.1 434.7 1149.5 433.8 1150.8 432.6C1151.6 431.7 1152.5 430.8 1153.4 428.7C1154.3 426.5 1155.1 421.7 1156.0 418.2C1156.9 414.7 1157.8 409.5 1158.6 407.7C1159.5 405.9 1159.7 405.1 1161.2 405.1C1163.5 405.1 1162.9 405.9 1165.2 405.9C1166.7 405.9 1166.9 404.3 1167.8 403.3C1168.7 402.3 1168.9 399.9 1170.4 399.9C1172.7 399.9 1172.0 402.0 1174.3 402.0C1176.6 402.0 1177.0 400.8 1178.3 400.6C1179.6 400.4 1179.9 400.4 1182.2 400.4C1184.5 400.4 1184.8 400.7 1186.1 401.7C1187.0 402.3 1187.9 403.3 1188.7 405.1C1189.6 406.9 1190.5 412.4 1191.4 413.7C1191.6 414.1 1191.8 414.3 1192.0 414.5C1193.0 415.1 1193.3 415.1 1195.0 415.1C1197.3 415.1 1197.7 413.9 1199.0 413.1C1200.1 412.4 1200.4 410.7 1202.4 410.7C1203.9 410.7 1204.2 413.2 1205.0 414.1C1206.4 415.4 1207.7 416.4 1209.0 417.1C1210.4 417.7 1211.7 417.9 1213.0 418.5C1214.0 418.9 1214.3 420.1 1216.0 420.1C1218.4 420.1 1218.7 419.3 1220.0 419.1C1222.0 418.6 1224.0 418.8 1226.0 418.1C1227.4 417.6 1228.7 415.8 1230.1 415.7C1231.7 415.5 1232.1 415.5 1235.1 415.5C1238.6 415.5 1239.1 415.5 1241.1 416.1C1242.4 416.5 1243.7 418.2 1245.1 419.1C1246.1 419.7 1246.3 420.7 1248.1 420.7C1249.8 420.7 1250.1 416.4 1251.1 416.1C1252.4 415.7 1252.7 415.7 1255.1 415.7C1257.4 415.7 1257.8 416.7 1259.1 418.1C1260.4 419.4 1261.8 423.0 1263.1 425.1C1264.4 427.2 1265.8 429.2 1267.1 430.7C1268.4 432.1 1268.8 434.1 1271.1 434.1C1272.9 434.1 1273.1 432.5 1274.1 431.1C1275.1 429.7 1276.1 426.6 1277.1 425.1C1278.0 423.8 1278.2 422.1 1279.7 422.1C1281.3 422.1 1281.6 423.2 1282.5 423.7C1283.7 424.2 1284.0 425.1 1286.1 425.1C1288.5 425.1 1288.8 424.8 1290.1 424.7C1291.5 424.6 1291.8 424.5 1294.1 424.5C1295.9 424.5 1296.1 428.1 1297.1 428.1C1298.1 428.1 1299.1 428.1 1300.1 428.1C1301.1 428.1 1302.1 427.2 1303.1 426.7C1304.5 425.9 1304.8 424.1 1307.1 424.1C1309.5 424.1 1309.8 424.8 1311.2 425.1C1312.5 425.3 1313.8 425.4 1315.2 425.7C1316.2 425.9 1317.2 425.7 1318.2 426.5C1319.2 427.2 1319.4 432.1 1321.2 432.1C1322.9 432.1 1323.2 431.5 1324.2 431.1C1325.5 430.5 1326.8 430.0 1328.2 429.1C1329.5 428.1 1330.8 426.6 1332.2 425.1C1333.2 423.9 1334.2 422.0 1335.2 421.1C1336.5 419.8 1337.9 419.5 1339.2 418.7C1340.5 417.8 1341.9 418.7 1343.2 416.1C1344.1 414.2 1345.1 406.6 1346.0 400.0C1346.5 396.3 1347.1 388.9 1347.6 387.0C1348.3 384.6 1348.4 384.6 1349.6 384.6C1351.0 384.6 1351.2 385.1 1352.0 385.6C1352.8 386.2 1353.6 387.2 1354.4 388.4C1355.3 389.8 1356.2 392.7 1357.0 394.0C1358.0 395.5 1359.0 395.9 1360.0 397.0C1361.0 398.2 1362.0 399.7 1363.0 401.0C1364.0 402.4 1364.3 405.0 1366.0 405.0C1367.8 405.0 1368.0 404.7 1369.0 404.4C1370.0 404.2 1370.3 403.4 1372.0 403.4C1373.8 403.4 1374.0 403.5 1375.0 403.6C1376.0 403.8 1377.0 404.4 1378.0 405.0C1379.0 405.7 1379.3 407.4 1381.1 407.4C1382.2 407.4 1382.4 404.4 1383.1 403.0C1383.7 401.6 1384.4 399.0 1385.1 399.0C1385.7 399.0 1386.4 399.0 1387.1 399.0C1388.1 399.0 1389.1 400.8 1390.1 401.6C1391.4 402.8 1392.7 404.1 1394.1 405.0C1395.4 406.0 1396.7 407.3 1398.1 407.6C1399.4 408.0 1400.7 407.7 1402.1 408.0C1403.1 408.3 1404.1 408.6 1405.1 409.4C1406.1 410.3 1407.1 412.1 1408.1 413.7C1409.1 415.2 1410.1 417.2 1411.1 419.1C1412.1 421.0 1413.1 423.4 1414.1 425.1C1415.1 426.7 1415.3 429.1 1417.1 429.1C1418.8 429.1 1419.1 428.9 1420.1 428.7C1421.1 428.5 1421.4 427.7 1423.1 427.7C1424.9 427.7 1425.1 429.5 1426.1 429.5C1427.4 429.5 1428.8 429.5 1430.1 429.5C1431.1 429.5 1432.1 428.8 1433.1 428.7C1434.1 428.5 1434.4 428.5 1436.1 428.5C1437.9 428.5 1438.1 431.1 1439.1 431.7C1440.1 432.2 1440.4 432.5 1442.1 432.5C1443.9 432.5 1444.1 432.1 1445.1 431.1C1446.0 430.2 1446.9 427.0 1447.7 426.1C1448.5 425.2 1448.7 424.7 1450.1 424.7C1451.9 424.7 1452.1 425.5 1453.1 425.5C1454.1 425.5 1455.1 425.5 1456.1 425.5C1457.1 425.5 1457.4 424.5 1459.1 424.5C1460.7 424.5 1460.9 425.1 1461.8 426.1C1462.6 427.0 1463.4 429.1 1464.2 431.1C1465.0 433.1 1465.8 436.0 1466.6 438.1C1467.4 440.3 1468.3 442.4 1469.2 444.1C1470.0 445.8 1470.9 447.9 1471.8 448.5C1472.4 449.0 1472.6 449.1 1473.8 449.1C1475.2 449.1 1475.4 446.5 1476.2 445.7C1476.7 445.2 1476.8 444.5 1477.8 444.5C1478.8 444.5 1479.0 445.8 1479.6 447.1C1480.4 448.9 1481.2 453.0 1482.0 456.0" fill="none" stroke="#1dc686" stroke-width="1.5" stroke-linejoin="round"/>
<path d="M93.5 428.2C94.3 436.5 95.0 446.9 95.8 453.1C96.5 458.8 97.2 464.1 97.9 466.2C99.2 470.1 100.5 467.9 101.8 470.1C102.7 471.6 103.5 474.1 104.4 476.6C105.5 479.9 105.8 488.4 107.8 488.4C108.9 488.4 109.0 479.6 109.6 471.4C110.1 465.5 110.5 451.2 110.9 447.8C111.4 444.4 111.5 443.9 112.3 443.9C113.3 443.9 113.5 452.0 114.1 454.4C114.8 457.1 115.0 459.6 116.2 459.6C118.0 459.6 118.3 458.1 119.3 455.7C120.2 453.6 121.1 450.1 121.9 445.2C122.6 441.3 123.3 432.4 124.0 429.5C124.6 427.3 124.7 425.6 125.6 425.6C127.4 425.6 127.7 429.9 128.8 430.8C129.8 431.7 130.1 432.1 131.9 432.1C134.2 432.1 133.5 430.8 135.8 430.8C137.3 430.8 137.6 436.7 138.4 437.4C140.2 438.7 141.9 438.0 143.7 438.7C145.4 439.3 147.2 440.8 148.9 441.3C150.7 441.8 151.1 442.1 154.1 442.1C156.1 442.1 155.6 437.4 157.6 437.4C160.1 437.4 159.4 438.7 162.0 438.7C164.6 438.7 165.0 438.7 166.5 437.9C167.2 437.5 167.9 430.5 168.5 426.9C169.2 423.3 169.9 417.0 170.6 416.4C172.1 415.1 172.5 415.1 175.1 415.1C178.2 415.1 178.6 415.5 180.3 416.4C182.1 417.3 182.5 421.6 185.6 421.6C188.6 421.6 189.1 421.3 190.8 419.0C192.1 417.3 193.4 411.3 194.7 408.5C196.0 405.8 196.4 402.0 198.7 402.0C200.6 402.0 200.9 405.0 202.1 407.2C203.5 410.2 205.0 417.5 206.5 419.0C207.4 419.9 207.6 420.3 209.1 420.3C211.4 420.3 211.8 416.4 213.1 416.4C214.8 416.4 216.6 416.4 218.3 416.4C220.0 416.4 221.8 419.7 223.5 421.6C225.7 424.1 226.3 430.0 230.1 430.0C233.1 430.0 232.3 426.9 235.3 426.9C238.4 426.9 237.5 431.6 240.6 431.6C242.1 431.6 242.3 415.4 243.2 408.5C243.8 403.8 244.4 396.9 245.0 395.5C246.1 392.8 247.3 395.0 248.4 392.8C249.5 390.7 250.7 382.5 251.8 378.4C252.5 376.0 252.7 371.9 253.9 371.9C255.4 371.9 255.7 382.2 256.5 385.0C257.4 387.8 257.6 390.2 259.1 390.2C260.5 390.2 260.7 376.8 261.5 371.9C262.6 364.9 263.8 358.7 264.9 356.2C266.0 353.9 266.2 353.0 268.0 353.0C270.3 353.0 270.7 353.3 272.0 357.5C272.8 360.3 273.7 370.1 274.6 374.5C275.5 379.0 276.3 383.2 277.2 385.0C278.5 387.7 279.8 387.0 281.1 388.1C282.7 389.4 283.1 392.3 285.9 392.3C287.4 392.3 287.6 384.8 288.5 382.4C289.1 380.7 289.2 378.4 290.3 378.4C292.6 378.4 292.9 384.4 294.2 386.3C296.0 388.8 296.4 391.5 299.5 391.5C302.5 391.5 303.0 387.3 304.7 385.0C306.3 382.9 306.7 378.4 309.4 378.4C310.5 378.4 310.6 386.9 311.2 390.2C312.1 395.0 312.3 402.0 313.9 402.0C316.2 402.0 316.5 399.4 317.8 398.1C319.4 396.5 319.8 393.6 322.5 393.6C325.1 393.6 324.4 399.4 327.0 399.4C330.0 399.4 329.1 398.1 332.2 398.1C335.3 398.1 335.7 402.3 337.4 405.9C338.7 408.6 340.1 412.9 341.4 416.4C342.8 420.3 343.2 428.0 345.8 428.0C348.5 428.0 348.9 424.5 350.5 423.5C352.7 422.1 354.8 423.0 357.0 420.9C358.3 419.7 359.6 416.2 360.9 414.4C362.0 412.9 362.3 410.4 364.1 410.4C366.1 410.4 366.4 412.3 367.5 415.7C368.4 418.3 369.2 425.5 370.1 428.8C371.0 432.0 371.2 436.1 372.7 436.1C375.0 436.1 375.3 428.1 376.7 426.2C378.4 423.6 380.1 426.2 381.9 422.2C382.9 419.9 384.0 411.3 385.0 407.8C386.4 403.2 386.8 398.7 389.2 398.7C391.8 398.7 392.2 398.8 393.7 399.4C395.4 400.2 397.2 402.5 398.9 405.2C400.7 408.0 402.4 413.5 404.1 417.0C405.9 420.5 407.6 424.5 409.4 426.2C411.1 427.8 411.6 428.8 414.6 428.8C417.7 428.8 418.1 427.1 419.9 423.5C421.0 421.2 421.3 411.8 423.3 411.8C424.8 411.8 425.0 419.0 425.9 420.9C426.9 423.2 427.2 424.8 429.0 424.8C432.8 424.8 431.8 423.5 435.6 423.5C438.6 423.5 439.1 426.1 440.8 428.8C442.6 431.4 444.3 437.2 446.0 440.6C447.8 443.9 448.2 449.2 451.3 449.2C452.8 449.2 453.0 441.1 453.9 436.6C454.8 432.1 455.6 424.2 456.5 422.2C458.0 418.8 458.4 418.8 461.0 418.8C463.4 418.8 463.8 418.8 465.2 420.9C466.2 422.5 466.5 434.0 468.3 434.0C470.6 434.0 470.9 431.8 472.2 430.1C474.0 427.8 475.7 423.3 477.5 420.9C479.6 418.0 481.8 416.1 484.0 414.4C485.3 413.3 485.6 411.8 487.9 411.8C490.2 411.8 489.6 423.5 491.9 423.5C494.2 423.5 494.5 416.7 495.8 414.4C497.3 411.7 497.6 408.3 500.2 408.3C503.0 408.3 503.4 413.8 505.0 414.4C507.1 415.2 507.7 415.2 511.5 415.2C513.0 415.2 513.2 407.0 514.1 406.5C516.3 405.2 518.5 406.5 520.7 405.2C522.4 404.2 524.2 400.0 525.9 394.7C527.6 389.5 529.4 380.9 531.1 371.2C532.4 363.9 533.8 353.2 535.1 345.0C535.9 339.5 536.8 331.8 537.7 329.3C539.4 324.4 541.1 328.2 542.8 324.4C544.0 321.8 545.2 315.4 546.3 309.8C547.3 305.0 548.3 296.7 549.3 293.7C550.0 291.2 550.2 289.3 551.6 289.3C553.3 289.3 552.8 295.1 554.5 295.1C556.6 295.1 556.9 295.1 558.0 292.2C558.8 290.2 559.6 280.0 560.4 268.8C561.1 259.0 561.8 238.8 562.4 227.8C563.1 216.9 563.8 203.2 564.5 201.5C565.1 200.0 565.2 200.0 566.2 200.0C567.4 200.0 567.6 207.3 568.3 208.8C569.3 210.9 569.5 211.1 571.2 211.1C573.8 211.1 574.1 209.2 575.6 207.9C576.9 206.8 578.1 207.0 579.4 203.8C580.3 201.6 581.2 193.5 582.0 191.2C583.0 188.7 583.3 187.4 585.0 187.4C587.2 187.4 587.5 187.4 588.8 187.7C589.3 187.8 589.8 191.9 590.2 198.5C590.7 205.1 591.2 226.2 591.7 233.7C592.4 244.1 593.1 248.2 593.8 251.2C595.0 256.9 596.3 256.7 597.6 257.1C599.5 257.7 600.0 257.7 603.4 257.7C605.6 257.7 606.0 255.5 607.2 252.7C608.2 250.5 609.2 244.0 610.1 242.4C610.7 241.5 610.9 241.0 611.9 241.0C612.9 241.0 613.1 251.5 613.7 254.1C614.6 258.6 614.9 260.6 616.6 260.6C619.1 260.6 618.4 260.0 621.0 260.0C623.2 260.0 623.5 262.3 624.8 264.4C626.1 266.7 627.5 270.8 628.9 274.6C630.1 278.2 631.4 280.7 632.7 286.3C633.7 290.7 634.6 297.4 635.6 303.9C636.3 308.4 637.0 316.4 637.7 318.5C638.2 320.4 638.4 320.9 639.4 320.9C640.6 320.9 640.8 314.4 641.5 309.8C642.4 303.1 643.4 290.2 644.4 283.4C645.1 278.6 645.8 273.2 646.4 271.7C647.0 270.4 647.2 270.2 648.2 270.2C649.4 270.2 649.6 280.9 650.2 283.4C651.2 287.0 651.5 288.7 653.2 288.7C654.9 288.7 655.1 288.7 656.1 284.9C656.8 282.2 657.5 272.2 658.1 262.9C658.7 255.0 659.3 238.1 659.9 233.7C660.6 228.4 660.8 227.8 662.0 227.8C663.7 227.8 663.9 228.3 664.9 229.3C666.1 230.5 667.4 234.3 668.7 236.6C669.9 238.7 671.0 240.5 672.2 242.4C673.7 244.9 675.1 246.6 676.6 249.8C677.8 252.3 678.0 259.4 680.1 259.4C681.5 259.4 681.7 245.8 682.4 242.4C683.4 238.2 684.4 236.2 685.4 235.7C686.6 235.1 687.0 235.1 689.2 235.1C690.4 235.1 690.5 237.1 691.2 242.4C691.7 246.2 692.2 260.3 692.7 262.9C693.7 268.2 693.9 268.2 695.6 268.2C697.7 268.2 698.0 267.9 699.1 267.3C700.4 266.7 700.7 263.8 702.9 263.8C705.5 263.8 705.9 264.5 707.3 265.9C708.8 267.2 710.2 267.8 711.7 273.2C712.7 276.7 713.7 285.9 714.6 292.2C715.3 296.6 715.5 305.4 716.7 305.4C718.0 305.4 718.2 300.5 719.0 298.0C719.8 295.6 720.0 290.7 721.4 290.7C722.6 290.7 722.7 292.7 723.4 295.1C724.1 297.5 724.3 306.8 725.5 306.8C726.5 306.8 726.6 306.8 727.2 303.9C727.7 301.5 728.2 282.3 728.7 277.6C729.4 270.9 729.5 268.8 730.7 268.8C732.8 268.8 733.1 270.7 734.2 271.7C735.5 272.8 736.8 273.1 738.0 275.2C739.0 276.9 740.0 278.3 741.0 283.4C741.7 287.0 742.3 297.9 743.0 301.0C743.6 303.6 743.8 305.4 744.8 305.4C746.0 305.4 746.1 289.9 746.8 286.3C747.5 282.8 747.7 280.5 748.9 280.5C750.6 280.5 750.8 283.8 751.8 284.9C753.8 287.0 755.7 284.9 757.7 288.7C758.4 290.1 759.1 298.0 759.9 301.7C760.7 305.9 761.5 312.0 762.3 312.5C763.9 313.4 765.4 312.5 766.9 313.4C768.3 314.1 769.6 317.1 770.9 318.6C772.4 320.2 772.7 322.6 775.3 322.6C776.7 322.6 776.9 322.1 777.7 318.6C778.2 316.5 778.8 306.8 779.3 306.3C780.3 305.4 780.6 305.4 782.3 305.4C784.1 305.4 784.4 307.8 785.4 309.4C786.8 311.4 787.1 317.1 789.4 317.1C791.6 317.1 791.9 314.5 793.1 314.0C794.7 313.4 795.1 313.4 797.8 313.4C799.6 313.4 799.0 314.0 800.8 314.0C802.1 314.0 802.3 308.3 803.0 304.7C803.8 300.7 804.6 293.4 805.5 290.9C806.2 288.7 806.4 287.2 807.6 287.2C809.1 287.2 809.3 288.7 810.1 289.3C811.1 290.2 811.4 291.5 813.2 291.5C815.0 291.5 815.2 288.3 816.2 286.3C817.6 283.7 818.9 280.1 820.2 277.0C821.7 273.7 823.1 269.5 824.6 267.2C825.9 265.0 827.2 263.3 828.6 262.5C829.8 261.9 830.1 261.6 832.3 261.6C833.7 261.6 833.9 266.8 834.7 269.3C835.8 272.5 836.8 276.8 837.8 278.6C838.8 280.4 839.1 281.6 840.9 281.6C842.7 281.6 842.9 279.0 844.0 277.0C845.0 275.0 846.0 270.6 847.0 269.3C848.4 267.6 848.7 267.2 851.1 267.2C853.2 267.2 853.5 267.4 854.7 269.3C855.8 271.0 856.8 277.9 857.8 280.1C859.1 282.8 860.3 283.8 861.5 284.7C862.9 285.7 864.2 285.5 865.5 286.3C866.9 287.0 868.2 286.3 869.5 289.3C870.3 291.0 871.0 298.7 871.7 301.7C872.7 306.0 873.7 309.1 874.8 310.3C875.8 311.5 876.1 311.5 877.9 311.5C879.1 311.5 879.3 306.4 880.0 303.2C880.6 300.5 880.8 294.0 881.9 294.0C882.8 294.0 882.9 300.2 883.4 304.7C883.9 309.3 884.4 319.2 884.9 321.7C885.6 324.7 885.7 324.8 886.8 324.8C888.8 324.8 889.1 321.4 890.2 320.2C891.5 318.6 892.8 318.5 894.2 316.5C895.4 314.6 896.6 310.1 897.9 307.8C899.1 305.6 899.4 302.6 901.6 302.6C903.6 302.6 903.8 302.6 905.0 303.2C906.2 303.9 906.5 308.4 908.7 308.4C910.5 308.4 910.7 304.1 911.7 300.1C912.8 296.2 913.8 287.4 914.8 283.2C915.6 279.8 916.5 276.5 917.3 275.5C918.5 273.9 918.8 273.9 921.0 273.9C922.8 273.9 923.0 273.9 924.1 275.5C924.8 276.6 925.5 285.8 926.2 286.3C927.6 287.2 927.9 287.2 930.2 287.2C932.4 287.2 931.8 284.7 933.9 284.7C935.7 284.7 936.0 284.7 937.0 286.3C937.6 287.2 938.2 295.6 938.9 298.6C939.8 303.0 940.0 307.2 941.6 307.2C943.6 307.2 943.9 304.7 945.0 304.1C945.9 303.6 946.2 303.2 947.8 303.2C949.2 303.2 949.4 304.9 950.3 312.5C950.8 317.2 951.3 325.6 951.8 338.6C952.2 349.6 952.7 381.9 953.1 385.5C953.8 391.2 954.0 391.2 955.2 391.2C957.0 391.2 957.3 390.9 958.3 389.4C959.2 388.1 960.1 385.4 960.9 381.5C961.8 377.7 962.7 369.2 963.6 364.5C964.4 359.8 965.3 354.9 966.2 352.7C967.1 350.6 967.3 349.3 968.8 349.3C970.0 349.3 970.2 351.8 970.9 354.0C971.9 357.4 973.0 365.4 974.0 369.7C975.3 375.2 976.7 378.7 978.0 382.8C979.3 387.0 980.6 391.4 981.9 394.6C982.9 397.2 984.0 400.5 985.0 401.2C985.9 401.7 986.1 401.7 987.7 401.7C989.2 401.7 989.4 396.6 990.3 394.6C991.2 392.5 992.2 390.8 993.2 389.4C994.2 387.8 995.2 388.3 996.3 385.5C997.2 383.1 998.0 375.3 998.9 372.4C999.5 370.3 999.7 367.9 1000.7 367.9C1002.0 367.9 1002.1 370.4 1002.8 372.4C1003.7 374.9 1004.6 380.1 1005.5 382.8C1006.5 386.1 1006.8 390.2 1008.6 390.2C1010.6 390.2 1010.9 390.2 1012.0 389.4C1013.1 388.6 1014.3 384.0 1015.4 380.2C1016.5 376.7 1017.5 371.2 1018.5 367.1C1019.9 362.0 1021.2 356.7 1022.5 352.7C1023.6 349.3 1024.7 345.5 1025.9 344.1C1026.9 342.8 1027.2 342.3 1029.0 342.3C1031.3 342.3 1031.6 343.6 1033.0 344.9C1034.3 346.1 1035.6 348.0 1036.9 350.1C1038.2 352.2 1039.5 354.1 1040.8 358.0C1041.7 360.6 1042.6 365.2 1043.4 368.4C1044.3 371.7 1044.5 377.6 1046.0 377.6C1047.6 377.6 1047.8 370.0 1048.7 368.4C1049.8 366.4 1050.1 365.8 1052.1 365.8C1054.7 365.8 1053.9 366.6 1056.5 366.6C1058.8 366.6 1058.2 362.4 1060.4 362.4C1061.7 362.4 1061.8 366.8 1062.5 372.4C1063.1 377.3 1063.8 390.1 1064.4 395.9C1065.2 404.2 1066.1 410.0 1067.0 413.0C1067.7 415.3 1067.9 416.9 1069.1 416.9C1070.2 416.9 1070.3 412.2 1070.9 409.0C1071.6 405.4 1072.3 397.4 1073.0 395.9C1073.6 394.6 1073.8 394.6 1074.8 394.6C1075.9 394.6 1076.1 405.8 1076.7 409.0C1077.4 412.8 1077.5 416.4 1078.8 416.4C1080.0 416.4 1080.2 409.2 1080.9 406.4C1081.7 403.3 1081.8 398.5 1083.2 398.5C1084.9 398.5 1085.1 400.8 1086.1 401.7C1087.0 402.5 1087.2 403.8 1088.7 403.8C1090.2 403.8 1090.5 401.9 1091.3 398.5C1092.2 395.2 1093.1 387.1 1094.0 380.2C1094.6 375.4 1095.2 366.6 1095.8 364.5C1096.4 362.4 1096.6 362.4 1097.6 362.4C1098.5 362.4 1098.7 371.6 1099.2 375.0C1099.8 378.9 1100.4 382.6 1101.0 384.1C1101.9 386.4 1102.8 386.4 1103.6 386.8C1104.5 387.2 1105.4 386.8 1106.3 387.3C1107.1 387.8 1108.0 390.8 1108.9 393.3C1109.8 395.8 1110.6 400.0 1111.5 402.5C1112.6 405.8 1113.8 409.0 1114.9 410.3C1116.1 411.7 1117.3 411.5 1118.6 412.2C1119.9 412.9 1121.2 413.3 1122.5 414.8C1123.6 416.1 1124.8 418.8 1125.9 420.8C1126.8 422.3 1127.0 425.3 1128.5 425.3C1129.7 425.3 1129.9 424.7 1130.6 423.4C1131.2 422.3 1131.8 417.9 1132.4 416.9C1133.1 415.9 1133.2 415.6 1134.3 415.6C1135.5 415.6 1135.7 421.5 1136.4 424.7C1137.2 428.8 1138.1 434.0 1139.0 437.8C1140.0 442.4 1141.1 446.3 1142.1 449.6C1143.3 453.2 1144.4 457.0 1145.5 458.8C1146.4 460.2 1147.3 461.4 1148.2 461.4C1149.6 461.4 1151.1 461.4 1152.6 461.4C1153.3 461.4 1154.0 459.5 1154.7 456.2C1155.4 452.8 1156.1 443.9 1156.8 437.8C1157.5 431.7 1158.2 423.1 1158.9 419.5C1159.5 416.3 1159.7 413.7 1160.7 413.7C1162.6 413.7 1162.8 414.8 1163.9 415.6C1164.7 416.2 1165.0 418.2 1166.5 418.2C1168.8 418.2 1168.1 414.8 1170.4 414.8C1172.7 414.8 1173.0 417.0 1174.3 418.2C1175.8 419.5 1176.2 422.1 1178.8 422.1C1180.8 422.1 1181.1 420.2 1182.2 419.5C1183.1 419.0 1183.3 418.2 1184.8 418.2C1186.3 418.2 1186.6 420.5 1187.4 423.4C1188.3 426.3 1189.2 434.2 1190.1 437.8C1191.0 442.0 1191.3 447.1 1193.0 447.1C1193.8 447.1 1193.9 445.7 1194.4 444.1C1195.1 441.8 1195.7 435.2 1196.4 432.1C1197.3 428.0 1198.1 425.1 1199.0 423.1C1199.9 421.1 1200.7 419.1 1201.6 419.1C1202.3 419.1 1202.9 419.1 1203.6 419.1C1204.1 419.1 1204.6 423.0 1205.0 425.1C1205.9 428.9 1206.8 433.9 1207.6 437.1C1208.4 440.0 1209.2 442.7 1210.0 444.1C1211.0 445.8 1212.0 446.4 1213.0 446.7C1214.4 447.1 1214.7 447.1 1217.0 447.1C1219.4 447.1 1219.7 446.0 1221.0 445.1C1222.4 444.1 1223.7 442.9 1225.0 441.1C1226.0 439.8 1227.0 437.1 1228.0 436.1C1228.7 435.4 1228.9 434.7 1230.1 434.7C1231.2 434.7 1231.4 436.6 1232.1 438.1C1232.7 439.6 1233.4 443.0 1234.1 444.1C1235.1 445.7 1236.1 445.6 1237.1 446.1C1238.1 446.6 1239.1 446.5 1240.1 447.1C1241.1 447.7 1241.3 450.7 1243.1 450.7C1244.8 450.7 1245.1 450.5 1246.1 450.1C1246.9 449.8 1247.1 448.7 1248.5 448.7C1249.6 448.7 1249.8 449.9 1250.5 451.1C1251.3 452.7 1252.2 456.4 1253.1 459.1C1253.9 461.8 1254.8 465.5 1255.7 467.1C1256.3 468.4 1256.5 469.5 1257.7 469.5C1258.9 469.5 1259.0 467.9 1259.7 467.1C1260.4 466.4 1260.5 465.1 1261.7 465.1C1262.9 465.1 1263.0 466.0 1263.7 467.1C1264.5 468.5 1265.3 471.9 1266.1 474.1C1267.1 476.9 1268.1 480.2 1269.1 482.1C1269.8 483.4 1269.9 485.1 1271.1 485.1C1271.9 485.1 1272.0 483.8 1272.5 482.1C1273.0 480.2 1273.6 474.4 1274.1 472.1C1274.9 468.8 1275.7 467.3 1276.5 466.1C1277.4 464.9 1277.6 464.1 1279.1 464.1C1280.6 464.1 1280.8 464.5 1281.7 465.1C1282.6 465.8 1283.6 467.5 1284.5 468.5C1285.7 469.9 1286.9 471.2 1288.1 472.1C1289.5 473.2 1290.8 473.4 1292.1 474.5C1293.1 475.4 1294.1 477.2 1295.1 478.1C1296.1 479.1 1296.4 480.5 1298.1 480.5C1299.9 480.5 1300.1 480.5 1301.1 480.1C1302.1 479.7 1303.1 478.1 1304.1 477.1C1305.1 476.1 1305.4 474.1 1307.1 474.1C1308.9 474.1 1309.1 474.3 1310.2 474.5C1311.2 474.8 1312.2 475.5 1313.2 476.1C1314.3 476.8 1314.6 478.5 1316.6 478.5C1318.1 478.5 1318.3 477.0 1319.2 476.1C1320.0 475.4 1320.2 473.7 1321.6 473.7C1322.8 473.7 1323.0 476.1 1323.8 477.1C1324.6 478.3 1324.8 480.1 1326.2 480.1C1327.6 480.1 1327.8 479.7 1328.6 478.1C1329.2 476.8 1329.9 473.4 1330.6 470.1C1331.2 466.9 1331.9 460.9 1332.6 458.1C1333.2 455.3 1333.9 453.1 1334.6 452.1C1335.4 450.8 1336.3 451.0 1337.2 450.5C1338.1 450.0 1338.9 450.2 1339.8 449.1C1340.6 448.1 1341.4 446.1 1342.2 443.1C1342.9 440.6 1343.5 437.9 1344.2 432.1C1344.8 426.8 1345.4 414.3 1346.0 408.0C1346.5 402.6 1347.1 396.2 1347.6 395.0C1348.3 393.6 1348.4 393.6 1349.6 393.6C1350.8 393.6 1350.9 395.4 1351.6 397.0C1352.3 398.7 1352.9 401.3 1353.6 404.0C1354.4 407.4 1355.2 412.6 1356.0 416.1C1356.8 419.5 1357.6 422.9 1358.4 425.1C1359.5 428.0 1360.6 429.5 1361.6 431.1C1362.8 432.8 1363.9 434.1 1365.0 435.1C1366.0 436.0 1367.0 436.6 1368.0 437.1C1369.2 437.6 1370.4 437.6 1371.6 438.1C1372.8 438.5 1373.9 439.3 1375.0 440.1C1376.4 441.0 1377.7 442.4 1379.0 443.1C1379.8 443.5 1380.1 444.1 1381.5 444.1C1382.2 444.1 1382.3 440.6 1382.7 438.1C1383.1 435.2 1383.6 428.8 1384.1 427.1C1384.7 424.6 1384.9 424.5 1386.1 424.5C1387.5 424.5 1387.7 425.3 1388.5 426.1C1389.3 426.9 1390.2 428.4 1391.1 430.1C1391.9 431.7 1392.8 434.5 1393.7 436.1C1394.6 437.8 1395.5 439.4 1396.5 440.1C1397.7 440.9 1398.9 440.7 1400.1 441.1C1401.1 441.4 1402.1 441.3 1403.1 442.1C1403.7 442.6 1404.4 443.6 1405.1 445.1C1405.7 446.6 1406.4 450.7 1407.1 452.1C1408.0 453.9 1408.8 454.6 1409.7 455.1C1410.5 455.5 1411.3 455.2 1412.1 455.7C1412.8 456.1 1413.4 456.3 1414.1 458.1C1414.6 459.5 1415.2 464.0 1415.7 466.1C1416.4 468.8 1416.5 472.1 1417.7 472.1C1418.5 472.1 1418.6 470.4 1419.1 469.1C1419.6 467.6 1420.2 464.1 1420.7 463.1C1421.3 462.0 1421.5 461.7 1422.5 461.7C1423.7 461.7 1423.8 463.1 1424.5 463.7C1425.4 464.5 1426.2 465.3 1427.1 465.7C1428.1 466.2 1429.1 466.7 1430.1 466.7C1431.1 466.7 1432.1 466.7 1433.1 466.7C1434.0 466.7 1434.9 467.2 1435.7 468.1C1436.4 468.9 1437.1 470.2 1437.7 472.1C1438.3 473.8 1438.9 477.7 1439.5 479.1C1439.9 480.1 1440.0 481.1 1440.7 481.1C1441.5 481.1 1441.7 478.7 1442.1 477.1C1442.7 475.4 1443.2 472.4 1443.7 471.1C1444.5 469.2 1445.3 468.6 1446.1 468.1C1447.1 467.6 1448.1 467.5 1449.1 467.5C1450.1 467.5 1451.1 467.5 1452.1 467.5C1452.9 467.5 1453.7 467.6 1454.5 468.7C1455.1 469.5 1455.6 471.3 1456.1 473.1C1456.8 475.4 1457.5 479.5 1458.1 482.1C1458.6 483.8 1459.0 485.2 1459.4 486.6C1460.6 491.0 1461.9 495.3 1463.1 499.0C1464.3 502.6 1465.6 505.5 1466.8 508.8C1468.0 512.1 1469.3 516.3 1470.5 518.7C1471.3 520.2 1472.1 522.4 1473.0 522.4C1473.8 522.4 1474.6 522.4 1475.4 522.4C1476.2 522.4 1476.4 520.6 1477.9 520.6C1480.3 520.6 1480.6 523.4 1482.0 524.8" fill="none" stroke="#efbf50" stroke-width="1.25" stroke-linejoin="round"/>
</g>
<line x1="1482.5" y1="111.8" x2="1482.5" y2="551.6" stroke="#d4d6d9" stroke-opacity="0.8" stroke-width="1" stroke-dasharray="4.3 2.3"/>
<line x1="93.5" y1="460.4" x2="1482.5" y2="460.4" stroke="#f1f2f3" stroke-width="1.05" stroke-dasharray="4.3 2.3" stroke-dashoffset="0.4"/>
<circle cx="1482.3" cy="456" r="4.6" fill="#ffffff" stroke="#1ec28b" stroke-width="2"/>
<circle cx="1482.3" cy="524.8" r="4.6" fill="#ffffff" stroke="#eebe52" stroke-width="2"/>
<rect x="40" y="448" width="48" height="23" rx="3" fill="#000"/>
<text x="63.9" y="464" font-size="13" fill="#fff" stroke="#fff" stroke-width="0.35" text-anchor="middle" textLength="32.5" lengthAdjust="spacingAndGlyphs">2.51B</text>
<rect x="1487" y="448" width="41" height="23" rx="3" fill="#000"/>
<text x="1507.5" y="464" font-size="13" fill="#fff" stroke="#fff" stroke-width="0.35" text-anchor="middle">1.96</text>
<rect x="1424" y="555" width="120" height="24" rx="3" fill="#000"/>
<text x="1532.8" y="570.7" font-size="13" fill="#fff" stroke="#fff" stroke-width="0.35" text-anchor="end" textLength="101" lengthAdjust="spacingAndGlyphs">4 Feb 2026, 03:00</text>
<path d="M94.0 626.3L96.5 626.5L99.0 627.1L101.5 627.4L103.9 627.9L106.2 627.9L108.4 627.9L110.6 627.5L112.8 627.5L115.0 628.0L117.2 627.6L119.4 627.5L121.6 628.0L123.9 627.6L126.1 627.9L128.3 627.6L130.5 627.7L132.7 627.3L134.9 627.6L137.1 627.7L139.3 627.5L141.5 627.6L143.8 627.5L146.0 627.1L148.2 627.6L150.4 627.4L152.6 627.2L154.8 627.0L157.0 627.5L159.2 627.2L161.5 627.4L163.7 627.5L165.9 627.3L168.1 627.4L170.3 627.1L172.5 627.3L174.7 627.1L176.9 627.3L179.1 627.3L181.4 626.8L183.6 626.8L185.8 626.8L188.0 627.2L190.2 626.9L193.5 626.2L196.7 625.6L199.0 625.7L201.2 625.5L203.5 625.7L205.7 625.6L207.9 625.6L210.2 625.8L212.4 625.8L214.7 626.0L216.9 625.9L219.2 626.1L221.4 626.1L223.7 626.2L225.9 626.0L228.1 625.7L230.4 626.2L232.6 626.3L234.9 626.2L237.1 626.1L239.4 626.2L241.6 625.9L243.9 626.3L246.1 626.2L248.4 626.0L250.6 625.9L252.8 626.4L255.1 626.5L257.3 626.0L259.6 626.4L261.8 626.3L265.1 623.8L268.3 621.4L270.9 621.4L273.5 621.6L276.1 622.1L278.8 622.4L281.4 622.4L284.1 623.7L286.8 625.7L289.5 627.2L291.7 626.7L294.0 627.0L296.2 626.5L298.4 626.7L300.7 626.5L302.9 626.0L305.2 626.1L307.4 625.6L310.0 624.8L312.6 623.9L315.2 623.5L317.8 622.5L320.4 622.0L323.7 622.8L326.9 624.0L329.2 623.8L331.5 623.7L333.8 623.3L336.0 623.0L338.3 623.4L340.6 622.9L342.9 623.1L345.2 622.9L347.4 622.4L349.7 622.4L352.1 617.4L354.5 612.6L356.9 607.7L359.8 611.9L362.7 615.5L365.2 612.9L367.6 610.0L370.3 610.4L373.0 610.9L375.8 611.0L379.0 616.2L382.3 619.8L385.5 617.1L388.1 617.9L390.7 618.5L393.3 619.4L395.9 619.8L398.5 620.7L401.0 620.9L403.4 621.6L405.9 621.6L408.3 621.9L410.7 621.8L413.2 622.4L415.6 622.8L418.1 623.0L420.4 621.5L422.7 620.8L425.0 619.6L427.4 618.1L429.7 617.3L432.0 616.0L434.3 614.9L437.0 615.0L439.6 614.8L442.2 615.0L444.8 615.0L447.4 614.9L450.0 615.2L452.6 615.9L455.2 616.9L457.8 617.8L460.4 618.1L462.8 617.7L465.1 617.5L467.5 617.3L469.9 616.8L472.2 616.6L474.6 616.2L477.0 616.0L479.3 615.8L481.7 615.3L484.1 615.1L486.4 614.9L488.7 615.5L491.0 615.4L493.3 616.2L495.5 616.7L497.8 616.9L500.1 617.2L502.4 618.0L504.7 618.1L506.9 618.5L509.2 619.1L512.5 618.2L515.7 617.5L518.0 618.1L520.3 618.1L522.6 618.7L524.8 619.2L527.1 620.0L529.4 620.2L531.7 620.9L534.0 620.9L536.2 621.5L538.5 622.0L541.8 620.7L545.0 619.1L547.4 619.7L549.8 619.8L552.1 619.6L554.5 619.4L556.9 619.2L559.2 619.4L561.6 619.1L564.0 619.4L566.3 619.3L568.7 618.8L571.1 618.8L573.4 619.1L575.8 618.8L578.4 619.3L581.0 619.8L583.6 619.9L586.2 620.1L588.8 620.7L591.2 621.2L593.5 622.0L595.8 622.3L598.1 622.9L600.5 623.5L602.8 624.0L605.1 624.6L607.5 624.7L609.8 625.1L612.2 624.7L614.6 624.7L616.9 625.4L619.3 625.4L621.7 625.6L624.0 625.3L626.4 625.7L628.8 625.8L631.1 625.6L633.4 625.4L635.7 625.7L637.9 625.8L640.2 625.7L642.5 625.6L644.7 625.4L647.0 625.4L649.3 625.3L651.5 625.2L653.8 625.5L656.1 625.3L658.3 625.6L660.6 625.1L662.8 625.7L665.1 625.5L667.4 625.7L669.6 625.6L671.9 625.6L674.2 625.4L676.4 625.0L678.7 625.5L681.0 625.1L683.2 625.3L686.5 624.3L689.7 623.7L692.0 623.8L694.3 623.7L696.6 623.7L698.9 624.1L701.1 623.9L703.4 623.8L705.7 623.7L708.0 624.1L710.2 623.9L712.5 624.0L715.0 624.5L717.4 624.5L719.9 624.8L722.3 625.3L724.5 625.3L726.8 625.5L729.0 625.1L731.2 625.5L733.5 625.6L735.7 625.5L737.9 625.5L740.1 625.0L742.4 625.4L744.6 625.5L746.8 625.0L749.1 625.1L751.3 625.1L753.5 625.3L755.8 625.2L758.0 625.3L760.2 625.5L762.5 625.0L764.7 625.0L766.9 625.1L769.2 625.0L771.4 625.0L773.6 625.6L775.9 625.5L778.1 625.0L780.3 625.3L782.6 625.2L784.8 625.2L787.0 625.2L789.3 625.4L791.5 625.3L793.7 625.2L796.0 625.1L798.2 625.2L800.4 625.3L802.9 624.6L805.3 624.3L807.7 624.0L810.2 623.3L812.5 623.4L814.7 623.3L817.0 623.4L819.3 623.6L821.6 623.9L823.9 624.1L826.1 623.9L828.4 624.3L830.7 624.3L833.0 624.3L835.4 624.1L837.9 624.0L840.3 623.9L842.7 623.9L845.2 623.6L847.6 623.7L850.1 623.4L852.5 623.3L854.8 623.2L857.1 623.5L859.3 623.7L861.6 623.3L863.9 623.6L866.2 623.7L868.5 624.0L870.7 624.1L873.0 623.8L875.3 624.0L877.9 620.1L880.3 620.5L882.7 620.7L885.1 620.7L887.7 621.1L890.3 621.7L892.9 622.1L895.5 623.0L898.1 623.3L900.4 623.4L902.7 623.6L905.0 623.5L907.3 623.4L909.6 623.5L911.9 623.4L914.2 623.1L916.5 623.4L918.8 623.0L921.1 623.1L923.3 623.5L925.6 623.0L927.9 623.1L930.2 623.1L932.5 623.6L934.8 623.1L937.1 623.3L939.7 622.6L942.3 622.8L944.9 621.9L947.6 622.0L950.2 621.4L952.4 621.6L954.7 621.7L957.0 621.9L959.3 621.7L961.5 621.9L963.8 621.5L966.1 622.0L968.4 621.9L970.7 622.1L972.9 622.0L975.2 621.9L977.5 622.4L979.8 622.6L982.1 622.1L984.3 622.4L986.6 622.7L988.9 622.9L991.2 622.7L993.5 622.7L995.7 623.0L998.1 622.8L1000.5 623.0L1002.8 623.1L1005.2 622.8L1007.6 622.8L1009.9 622.8L1012.3 622.7L1014.7 622.7L1017.0 622.5L1019.4 622.7L1021.8 622.7L1024.1 622.6L1026.4 621.8L1028.8 621.6L1031.1 620.8L1033.4 620.6L1035.7 621.0L1037.9 621.3L1040.2 621.5L1042.4 621.7L1044.6 621.9L1046.9 622.3L1049.1 622.7L1051.4 622.5L1053.6 623.0L1055.9 622.7L1058.2 623.1L1060.5 623.2L1062.8 623.0L1065.0 622.9L1067.3 623.1L1069.6 622.8L1071.9 622.8L1074.2 622.8L1076.5 623.0L1078.8 622.9L1081.1 622.8L1083.4 623.1L1085.7 623.3L1088.0 622.8L1090.2 623.1L1092.5 622.9L1094.8 623.2L1097.1 623.0L1099.4 622.8L1101.7 622.8L1104.0 623.0L1106.2 622.5L1108.5 622.5L1110.7 622.2L1112.9 621.9L1115.2 621.8L1117.4 621.6L1119.7 621.6L1122.0 621.9L1124.3 621.5L1126.6 622.1L1128.9 621.8L1131.2 621.9L1133.5 621.9L1135.8 622.1L1138.1 622.2L1140.4 622.0L1142.7 622.0L1145.0 622.2L1147.3 622.3L1149.6 622.1L1151.9 622.3L1154.2 622.5L1156.5 622.2L1158.8 622.1L1161.1 622.3L1163.5 622.3L1165.8 622.7L1168.2 622.8L1170.5 623.2L1172.9 623.2L1175.3 623.0L1177.6 623.1L1180.0 623.4L1183.1 622.9L1186.2 622.6L1190.3 617.2L1194.5 612.1L1197.0 611.0L1199.1 603.8L1200.6 599.2L1201.9 602.3L1202.9 598.1L1204.3 602.8L1206.3 600.2L1208.9 599.2L1211.0 602.3L1214.1 602.3L1217.7 604.6L1219.7 600.2L1222.1 599.9L1224.4 600.7L1227.0 596.6L1229.0 590.4L1231.1 591.4L1232.6 591.2L1236.3 593.3L1239.4 596.6L1241.4 600.7L1244.5 600.5L1247.1 598.6L1249.7 599.0L1252.3 598.6L1256.4 603.3L1259.0 599.7L1262.1 603.6L1264.9 602.1L1267.7 599.4L1269.8 600.2L1271.9 599.7L1273.4 600.9L1276.3 602.6L1279.1 602.8L1281.4 602.6L1283.8 603.9L1286.1 603.2L1288.4 603.8L1291.0 602.9L1293.6 602.3L1295.9 603.3L1298.2 603.6L1301.3 599.7L1303.4 598.4L1305.4 600.2L1309.0 600.5L1311.6 600.9L1314.2 602.8L1316.3 602.6L1318.3 604.3L1320.4 602.0L1324.5 603.3L1327.3 603.1L1330.0 604.3L1332.9 603.8L1335.8 602.1L1338.0 600.3L1340.3 599.0L1342.5 597.8L1344.7 597.7L1347.0 597.6L1349.2 596.2L1351.5 596.6L1353.7 596.5L1355.9 596.4L1358.2 596.3L1360.4 595.7L1362.7 596.3L1364.9 596.8L1367.1 595.7L1369.4 595.8L1371.6 595.0L1373.9 595.1L1376.1 595.4L1378.5 596.1L1380.9 595.4L1383.3 597.1L1385.7 597.5L1388.1 596.4L1390.5 598.2L1392.9 597.8L1395.1 598.2L1397.4 599.6L1399.6 599.8L1402.1 600.4L1404.6 599.8L1407.2 600.6L1409.7 600.5L1411.9 601.2L1414.2 601.9L1416.4 601.4L1418.6 602.7L1420.9 603.5L1423.1 603.2L1425.5 603.8L1427.9 603.9L1430.3 603.5L1432.7 604.5L1435.1 604.6L1437.5 605.6L1439.9 605.5L1442.4 606.2L1445.0 606.5L1447.5 606.2L1450.0 607.2L1452.2 606.0L1454.5 604.5L1456.7 602.8L1459.0 603.1L1461.2 605.3L1463.4 605.5L1466.3 606.9L1469.1 607.1L1472.0 608.9L1472.0 640.0 L94.0 640.0 Z" fill="#0b1021"/>
<rect x="1279.5" y="580" width="192.5" height="60" fill="#1b233d" fill-opacity="0.97"/>
<path d="M94.0 626.3L96.5 626.5L99.0 627.1L101.5 627.4L103.9 627.9L106.2 627.9L108.4 627.9L110.6 627.5L112.8 627.5L115.0 628.0L117.2 627.6L119.4 627.5L121.6 628.0L123.9 627.6L126.1 627.9L128.3 627.6L130.5 627.7L132.7 627.3L134.9 627.6L137.1 627.7L139.3 627.5L141.5 627.6L143.8 627.5L146.0 627.1L148.2 627.6L150.4 627.4L152.6 627.2L154.8 627.0L157.0 627.5L159.2 627.2L161.5 627.4L163.7 627.5L165.9 627.3L168.1 627.4L170.3 627.1L172.5 627.3L174.7 627.1L176.9 627.3L179.1 627.3L181.4 626.8L183.6 626.8L185.8 626.8L188.0 627.2L190.2 626.9L193.5 626.2L196.7 625.6L199.0 625.7L201.2 625.5L203.5 625.7L205.7 625.6L207.9 625.6L210.2 625.8L212.4 625.8L214.7 626.0L216.9 625.9L219.2 626.1L221.4 626.1L223.7 626.2L225.9 626.0L228.1 625.7L230.4 626.2L232.6 626.3L234.9 626.2L237.1 626.1L239.4 626.2L241.6 625.9L243.9 626.3L246.1 626.2L248.4 626.0L250.6 625.9L252.8 626.4L255.1 626.5L257.3 626.0L259.6 626.4L261.8 626.3L265.1 623.8L268.3 621.4L270.9 621.4L273.5 621.6L276.1 622.1L278.8 622.4L281.4 622.4L284.1 623.7L286.8 625.7L289.5 627.2L291.7 626.7L294.0 627.0L296.2 626.5L298.4 626.7L300.7 626.5L302.9 626.0L305.2 626.1L307.4 625.6L310.0 624.8L312.6 623.9L315.2 623.5L317.8 622.5L320.4 622.0L323.7 622.8L326.9 624.0L329.2 623.8L331.5 623.7L333.8 623.3L336.0 623.0L338.3 623.4L340.6 622.9L342.9 623.1L345.2 622.9L347.4 622.4L349.7 622.4L352.1 617.4L354.5 612.6L356.9 607.7L359.8 611.9L362.7 615.5L365.2 612.9L367.6 610.0L370.3 610.4L373.0 610.9L375.8 611.0L379.0 616.2L382.3 619.8L385.5 617.1L388.1 617.9L390.7 618.5L393.3 619.4L395.9 619.8L398.5 620.7L401.0 620.9L403.4 621.6L405.9 621.6L408.3 621.9L410.7 621.8L413.2 622.4L415.6 622.8L418.1 623.0L420.4 621.5L422.7 620.8L425.0 619.6L427.4 618.1L429.7 617.3L432.0 616.0L434.3 614.9L437.0 615.0L439.6 614.8L442.2 615.0L444.8 615.0L447.4 614.9L450.0 615.2L452.6 615.9L455.2 616.9L457.8 617.8L460.4 618.1L462.8 617.7L465.1 617.5L467.5 617.3L469.9 616.8L472.2 616.6L474.6 616.2L477.0 616.0L479.3 615.8L481.7 615.3L484.1 615.1L486.4 614.9L488.7 615.5L491.0 615.4L493.3 616.2L495.5 616.7L497.8 616.9L500.1 617.2L502.4 618.0L504.7 618.1L506.9 618.5L509.2 619.1L512.5 618.2L515.7 617.5L518.0 618.1L520.3 618.1L522.6 618.7L524.8 619.2L527.1 620.0L529.4 620.2L531.7 620.9L534.0 620.9L536.2 621.5L538.5 622.0L541.8 620.7L545.0 619.1L547.4 619.7L549.8 619.8L552.1 619.6L554.5 619.4L556.9 619.2L559.2 619.4L561.6 619.1L564.0 619.4L566.3 619.3L568.7 618.8L571.1 618.8L573.4 619.1L575.8 618.8L578.4 619.3L581.0 619.8L583.6 619.9L586.2 620.1L588.8 620.7L591.2 621.2L593.5 622.0L595.8 622.3L598.1 622.9L600.5 623.5L602.8 624.0L605.1 624.6L607.5 624.7L609.8 625.1L612.2 624.7L614.6 624.7L616.9 625.4L619.3 625.4L621.7 625.6L624.0 625.3L626.4 625.7L628.8 625.8L631.1 625.6L633.4 625.4L635.7 625.7L637.9 625.8L640.2 625.7L642.5 625.6L644.7 625.4L647.0 625.4L649.3 625.3L651.5 625.2L653.8 625.5L656.1 625.3L658.3 625.6L660.6 625.1L662.8 625.7L665.1 625.5L667.4 625.7L669.6 625.6L671.9 625.6L674.2 625.4L676.4 625.0L678.7 625.5L681.0 625.1L683.2 625.3L686.5 624.3L689.7 623.7L692.0 623.8L694.3 623.7L696.6 623.7L698.9 624.1L701.1 623.9L703.4 623.8L705.7 623.7L708.0 624.1L710.2 623.9L712.5 624.0L715.0 624.5L717.4 624.5L719.9 624.8L722.3 625.3L724.5 625.3L726.8 625.5L729.0 625.1L731.2 625.5L733.5 625.6L735.7 625.5L737.9 625.5L740.1 625.0L742.4 625.4L744.6 625.5L746.8 625.0L749.1 625.1L751.3 625.1L753.5 625.3L755.8 625.2L758.0 625.3L760.2 625.5L762.5 625.0L764.7 625.0L766.9 625.1L769.2 625.0L771.4 625.0L773.6 625.6L775.9 625.5L778.1 625.0L780.3 625.3L782.6 625.2L784.8 625.2L787.0 625.2L789.3 625.4L791.5 625.3L793.7 625.2L796.0 625.1L798.2 625.2L800.4 625.3L802.9 624.6L805.3 624.3L807.7 624.0L810.2 623.3L812.5 623.4L814.7 623.3L817.0 623.4L819.3 623.6L821.6 623.9L823.9 624.1L826.1 623.9L828.4 624.3L830.7 624.3L833.0 624.3L835.4 624.1L837.9 624.0L840.3 623.9L842.7 623.9L845.2 623.6L847.6 623.7L850.1 623.4L852.5 623.3L854.8 623.2L857.1 623.5L859.3 623.7L861.6 623.3L863.9 623.6L866.2 623.7L868.5 624.0L870.7 624.1L873.0 623.8L875.3 624.0L877.9 620.1L880.3 620.5L882.7 620.7L885.1 620.7L887.7 621.1L890.3 621.7L892.9 622.1L895.5 623.0L898.1 623.3L900.4 623.4L902.7 623.6L905.0 623.5L907.3 623.4L909.6 623.5L911.9 623.4L914.2 623.1L916.5 623.4L918.8 623.0L921.1 623.1L923.3 623.5L925.6 623.0L927.9 623.1L930.2 623.1L932.5 623.6L934.8 623.1L937.1 623.3L939.7 622.6L942.3 622.8L944.9 621.9L947.6 622.0L950.2 621.4L952.4 621.6L954.7 621.7L957.0 621.9L959.3 621.7L961.5 621.9L963.8 621.5L966.1 622.0L968.4 621.9L970.7 622.1L972.9 622.0L975.2 621.9L977.5 622.4L979.8 622.6L982.1 622.1L984.3 622.4L986.6 622.7L988.9 622.9L991.2 622.7L993.5 622.7L995.7 623.0L998.1 622.8L1000.5 623.0L1002.8 623.1L1005.2 622.8L1007.6 622.8L1009.9 622.8L1012.3 622.7L1014.7 622.7L1017.0 622.5L1019.4 622.7L1021.8 622.7L1024.1 622.6L1026.4 621.8L1028.8 621.6L1031.1 620.8L1033.4 620.6L1035.7 621.0L1037.9 621.3L1040.2 621.5L1042.4 621.7L1044.6 621.9L1046.9 622.3L1049.1 622.7L1051.4 622.5L1053.6 623.0L1055.9 622.7L1058.2 623.1L1060.5 623.2L1062.8 623.0L1065.0 622.9L1067.3 623.1L1069.6 622.8L1071.9 622.8L1074.2 622.8L1076.5 623.0L1078.8 622.9L1081.1 622.8L1083.4 623.1L1085.7 623.3L1088.0 622.8L1090.2 623.1L1092.5 622.9L1094.8 623.2L1097.1 623.0L1099.4 622.8L1101.7 622.8L1104.0 623.0L1106.2 622.5L1108.5 622.5L1110.7 622.2L1112.9 621.9L1115.2 621.8L1117.4 621.6L1119.7 621.6L1122.0 621.9L1124.3 621.5L1126.6 622.1L1128.9 621.8L1131.2 621.9L1133.5 621.9L1135.8 622.1L1138.1 622.2L1140.4 622.0L1142.7 622.0L1145.0 622.2L1147.3 622.3L1149.6 622.1L1151.9 622.3L1154.2 622.5L1156.5 622.2L1158.8 622.1L1161.1 622.3L1163.5 622.3L1165.8 622.7L1168.2 622.8L1170.5 623.2L1172.9 623.2L1175.3 623.0L1177.6 623.1L1180.0 623.4L1183.1 622.9L1186.2 622.6L1190.3 617.2L1194.5 612.1L1197.0 611.0L1199.1 603.8L1200.6 599.2L1201.9 602.3L1202.9 598.1L1204.3 602.8L1206.3 600.2L1208.9 599.2L1211.0 602.3L1214.1 602.3L1217.7 604.6L1219.7 600.2L1222.1 599.9L1224.4 600.7L1227.0 596.6L1229.0 590.4L1231.1 591.4L1232.6 591.2L1236.3 593.3L1239.4 596.6L1241.4 600.7L1244.5 600.5L1247.1 598.6L1249.7 599.0L1252.3 598.6L1256.4 603.3L1259.0 599.7L1262.1 603.6L1264.9 602.1L1267.7 599.4L1269.8 600.2L1271.9 599.7L1273.4 600.9L1276.3 602.6L1279.1 602.8L1281.4 602.6L1283.8 603.9L1286.1 603.2L1288.4 603.8L1291.0 602.9L1293.6 602.3L1295.9 603.3L1298.2 603.6L1301.3 599.7L1303.4 598.4L1305.4 600.2L1309.0 600.5L1311.6 600.9L1314.2 602.8L1316.3 602.6L1318.3 604.3L1320.4 602.0L1324.5 603.3L1327.3 603.1L1330.0 604.3L1332.9 603.8L1335.8 602.1L1338.0 600.3L1340.3 599.0L1342.5 597.8L1344.7 597.7L1347.0 597.6L1349.2 596.2L1351.5 596.6L1353.7 596.5L1355.9 596.4L1358.2 596.3L1360.4 595.7L1362.7 596.3L1364.9 596.8L1367.1 595.7L1369.4 595.8L1371.6 595.0L1373.9 595.1L1376.1 595.4L1378.5 596.1L1380.9 595.4L1383.3 597.1L1385.7 597.5L1388.1 596.4L1390.5 598.2L1392.9 597.8L1395.1 598.2L1397.4 599.6L1399.6 599.8L1402.1 600.4L1404.6 599.8L1407.2 600.6L1409.7 600.5L1411.9 601.2L1414.2 601.9L1416.4 601.4L1418.6 602.7L1420.9 603.5L1423.1 603.2L1425.5 603.8L1427.9 603.9L1430.3 603.5L1432.7 604.5L1435.1 604.6L1437.5 605.6L1439.9 605.5L1442.4 606.2L1445.0 606.5L1447.5 606.2L1450.0 607.2L1452.2 606.0L1454.5 604.5L1456.7 602.8L1459.0 603.1L1461.2 605.3L1463.4 605.5L1466.3 606.9L1469.1 607.1L1472.0 608.9" fill="none" stroke="#2e4c93" stroke-width="1"/>
<rect x="1272.5" y="599.3" width="15.6" height="18.5" rx="5.5" fill="#34373f" fill-opacity="0.9"/>
<rect x="1277.9" y="605.3" width="1.4" height="6.7" fill="#a9acb2"/>
<rect x="1281.3" y="605.3" width="1.4" height="6.7" fill="#a9acb2"/>
<rect x="1463.4" y="599.3" width="15.6" height="18.5" rx="5.5" fill="#34373f" fill-opacity="0.9"/>
<rect x="1468.8" y="605.3" width="1.4" height="6.7" fill="#a9acb2"/>
<rect x="1472.2" y="605.3" width="1.4" height="6.7" fill="#a9acb2"/>
<rect x="1534.5" y="572" width="1.5" height="21" fill="#6d7383"/>
<rect x="1232" y="482" width="233" height="124" rx="14" fill="#000" fill-opacity="0.55" filter="url(#sh)"/>
<rect x="1236" y="483" width="225" height="115.5" rx="10" fill="#04060a" fill-opacity="0.985"/>
<text x="1251.7" y="516.8" font-size="16" fill="#fff" stroke="#fff" stroke-width="0.28" textLength="128" lengthAdjust="spacingAndGlyphs">4 Feb 2026, 03:00</text>
<circle cx="1257.2" cy="546.3" r="4.5" fill="#eebe52" stroke="#f4f4f4" stroke-width="1.8"/>
<text x="1267.3" y="552.2" font-size="16" fill="#dfe0e2" textLength="71.4" lengthAdjust="spacingAndGlyphs">XRP Price</text>
<text x="1443.6" y="552.2" font-size="16" fill="#fff" stroke="#fff" stroke-width="0.28" text-anchor="end" textLength="40.2" lengthAdjust="spacingAndGlyphs">$1.58</text>
<circle cx="1257.2" cy="570.6" r="4.5" fill="#1ec28b" stroke="#f4f4f4" stroke-width="1.8"/>
<text x="1267.3" y="576.1" font-size="16" fill="#dfe0e2" textLength="102.9" lengthAdjust="spacingAndGlyphs">Open Interest</text>
<text x="1443.6" y="576.1" font-size="16" fill="#fff" stroke="#fff" stroke-width="0.28" text-anchor="end" textLength="50.9" lengthAdjust="spacingAndGlyphs">$2.61B</text>
</svg>
</body></html>
